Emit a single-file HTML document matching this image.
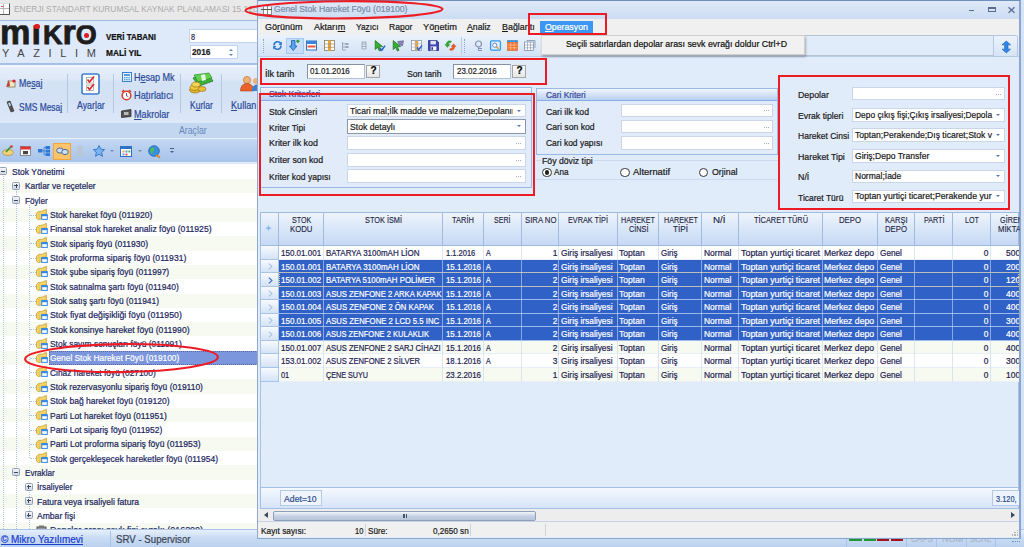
<!DOCTYPE html>
<html lang="tr">
<head>
<meta charset="utf-8">
<title>Genel Stok Hareket Föyü (019100)</title>
<style>
html,body{margin:0;padding:0;}
body{width:1024px;height:547px;overflow:hidden;position:relative;background:#d6e4f7;font-family:"Liberation Sans",sans-serif;font-size:9.5px;color:#1a1a1a;}
.a{position:absolute;box-sizing:border-box;}
.t{position:absolute;white-space:nowrap;transform-origin:0 50%;line-height:12px;height:12px;-webkit-text-stroke-width:.22px;}
u{text-decoration:underline;}
svg{position:absolute;overflow:visible;}
.inp{position:absolute;background:#fff;border:1px solid #c5d3e6;box-sizing:border-box;}
.red{position:absolute;border:2.4px solid #ed1c24;box-sizing:border-box;}
.sep{position:absolute;width:1px;background:#b4c8e2;}
.row{position:absolute;left:0;width:257px;height:14.33px;}
.g{background:#f6faf0;}
.pm{position:absolute;width:8px;height:8px;border:1px solid #909eb6;border-radius:1.5px;background:linear-gradient(#f4f6fa,#cfd7e3);box-sizing:border-box;}
.pm:before{content:"";position:absolute;left:1px;top:2.5px;width:4px;height:1px;background:#3a4658;}
.pm.p:after{content:"";position:absolute;left:2.5px;top:1px;width:1px;height:4px;background:#3a4658;}
.fo{position:absolute;width:11px;height:9px;}
.hc{position:absolute;top:211px;height:36px;border-right:1px solid #b4c9e6;box-sizing:border-box;}
.gr{position:absolute;left:260px;width:758px;height:13.6px;}
.vl{position:absolute;width:1px;top:247px;height:136px;background:#e3eaf3;}
.dd{position:absolute;width:0;height:0;border-left:2.3px solid transparent;border-right:2.3px solid transparent;border-top:2.7px solid #4f78b4;}
.el{position:absolute;font-size:7px;color:#9aa;letter-spacing:0;line-height:6px;}
</style>
</head>
<body>
<div class="a" style="left:0;top:0;width:258px;height:20px;background:#e9e9e9;"></div>
<div class="a" style="left:-1px;top:3px;width:11px;height:11.6px;background:#fdfdfd;border:1px solid #555;border-top-color:#e0e0e0;"></div>
<div class="a" style="left:3px;top:4px;width:1px;height:10px;background:#b5b5b5;"></div><div class="a" style="left:0;top:7.6px;width:9px;height:1px;background:#b5b5b5;"></div><div class="a" style="left:1px;top:5.6px;width:1.6px;height:1.6px;border-radius:1px;background:#e33;"></div>
<div class="t" id="t0" style="left:13.5px;top:3.2px;font-size:9.50px;color:#ababab;transform:scaleX(0.882);-webkit-text-stroke:0;">ENERJI STANDART KURUMSAL KAYNAK PLANLAMASI 15.12c</div>
<div class="a" style="left:0;top:20px;width:258px;height:44.6px;background:#deeafa;border-top:1px solid #9dbbe4;border-bottom:2px solid #a3c0e8;"></div>
<div class="t" id="t1" style="left:-0.3px;top:29.5px;font-size:35.50px;color:#1d1d1d;font-weight:bold;transform:scaleX(0.965);line-height:40px;height:40px;top:12.3px;clip-path:inset(12.9px 0 0 0);-webkit-text-stroke:.8px #1d1d1d;"><span>m</span><span style="margin-left:1px">i</span><span style="font-size:28px;margin-left:2px">K</span><span>r</span><span style="font-size:28px">O</span></div>
<div class="a" style="left:34.2px;top:23.8px;width:5.4px;height:5.4px;border-radius:3px;background:#e11b22;"></div>
<div class="a" style="left:84px;top:33px;width:5px;height:5px;border-radius:3px;background:#e11b22;"></div>
<div class="t" id="t2" style="left:2.0px;top:47.3px;font-size:10.50px;color:#444;transform:scaleX(1.045);letter-spacing:8.3px;-webkit-text-stroke:0;">YAZILIM</div>
<div class="t" id="t3" style="left:106.2px;top:31.2px;font-size:9.00px;color:#111;font-weight:bold;transform:scaleX(0.880);">VERİ TABANI</div>
<div class="t" id="t4" style="left:106.2px;top:47.0px;font-size:9.00px;color:#111;font-weight:bold;transform:scaleX(0.923);">MALİ YIL</div>
<div class="inp" style="left:189.4px;top:29.3px;width:70px;height:14.2px;border-color:#c3d5ee;"></div>
<div class="t" id="t5" style="left:191.2px;top:30.5px;font-size:9.00px;color:#2a2a4a;transform:scaleX(0.798);">8</div>
<div class="inp" style="left:189.8px;top:45.3px;width:48px;height:14.2px;border-color:#c3d5ee;"></div>
<div class="t" id="t6" style="left:191.6px;top:46.0px;font-size:9.50px;color:#1a1a1a;font-weight:bold;transform:scaleX(0.870);">2016</div>
<div class="dd" style="left:228.5px;top:54px;border-top-color:#6484b2;border-width:2px 2px 0 2px;border-top-width:2.5px;"></div>
<div class="dd" style="left:228.5px;top:48.5px;border-top:none;border-bottom:2.5px solid #6484b2;border-left-width:2px;border-right-width:2px;"></div>
<div class="a" style="left:0;top:64.6px;width:258px;height:58px;background:linear-gradient(#e6eefa 0,#dfe9f8 20%,#d4e2f5 27%,#d5e2f6 60%,#dde8f8 100%);border-top:2px solid #f1f6fd;"></div>
<div class="a" style="left:0;top:122.7px;width:258px;height:15px;background:#c4d7f0;"></div>
<div class="a" style="left:0;top:137.5px;width:258px;height:25.5px;background:linear-gradient(#c6d9f3,#b4ccee 50%,#a9c4eb);border-top:1.5px solid #e9f1fb;border-bottom:1px solid #e4edf9;"></div>
<div class="sep" style="left:67.2px;top:74px;height:39px;"></div>
<div class="sep" style="left:112.8px;top:74px;height:39px;"></div>
<div class="sep" style="left:180.2px;top:74px;height:39px;"></div>
<div class="sep" style="left:221.2px;top:74px;height:39px;"></div>
<svg style="left:5px;top:78px" width="12" height="11" viewBox="0 0 12 11"><rect x="3" y="3" width="7" height="6" fill="#f0e7c8" stroke="#8a7a4a" stroke-width=".8"/><path d="M1 9 L4 2 L5 8z" fill="#c0392b"/><circle cx="9" cy="3" r="1.6" fill="#d23"/></svg>
<div class="t" id="t7" style="left:19.0px;top:76.7px;font-size:10.50px;color:#2a4a9a;transform:scaleX(0.835);">Me<u>s</u>aj</div>
<svg style="left:6px;top:101px" width="9" height="12" viewBox="0 0 9 12"><path d="M1 1 L4 0 L8 10 L5 11z" fill="#555" stroke="#222" stroke-width=".6"/><path d="M2.2 2.2 L3.8 1.6 L5 4.6 L3.4 5.2z" fill="#cde"/></svg>
<div class="t" id="t8" style="left:19.0px;top:101.2px;font-size:10.50px;color:#2a4a9a;transform:scaleX(0.804);">SMS Mesa<u>j</u></div>
<svg style="left:81px;top:72.5px" width="19" height="22" viewBox="0 0 19 22"><rect x="1" y="1" width="17" height="20" rx="2" fill="#fdfdfd" stroke="#3d7fd0" stroke-width="1.6"/><rect x="5.5" y="4.5" width="7" height="5.5" fill="#fff" stroke="#999" stroke-width=".7"/><rect x="5.5" y="12" width="7" height="5.5" fill="#fff" stroke="#999" stroke-width=".7"/><path d="M6.5 6.5 L8.5 9 L13 3.5" fill="none" stroke="#d22" stroke-width="1.6"/><path d="M6.5 14 L8.5 16.5 L13 11" fill="none" stroke="#d22" stroke-width="1.6"/></svg>
<div class="t" id="t9" style="left:76.9px;top:99.4px;font-size:10.50px;color:#2a4a9a;transform:scaleX(0.837);">Ayar<u>l</u>ar</div>
<svg style="left:121.5px;top:72px" width="10" height="10" viewBox="0 0 10 10"><rect x=".5" y=".5" width="9" height="9" fill="#e8f2fc" stroke="#3b7fd1"/><rect x="2" y="2" width="6" height="2" fill="#5a9be0"/><g fill="#5a9be0"><rect x="2" y="5" width="1.5" height="1.3"/><rect x="4.2" y="5" width="1.5" height="1.3"/><rect x="6.4" y="5" width="1.5" height="1.3"/><rect x="2" y="7" width="1.5" height="1.3"/><rect x="4.2" y="7" width="1.5" height="1.3"/><rect x="6.4" y="7" width="1.5" height="1.3"/></g></svg>
<div class="t" id="t10" style="left:133.9px;top:71.2px;font-size:10.50px;color:#2a4a9a;transform:scaleX(0.859);">H<u>e</u>sap Mk</div>
<svg style="left:120.5px;top:89px" width="11" height="12" viewBox="0 0 11 12"><circle cx="5.5" cy="6.5" r="4.3" fill="#fff" stroke="#d8402a" stroke-width="1.6"/><path d="M1 3 L3 1 M10 3 L8 1" stroke="#d8402a" stroke-width="1.6"/><path d="M5.5 4 V6.8 L7.3 7.5" fill="none" stroke="#337" stroke-width=".8"/></svg>
<div class="t" id="t11" style="left:133.9px;top:89.0px;font-size:10.50px;color:#2a4a9a;transform:scaleX(0.874);">Ha<u>t</u>ırlatıcı</div>
<svg style="left:120.5px;top:108.5px" width="11" height="9" viewBox="0 0 11 9"><path d="M0.5 2 L10 .5 V7.5 L.5 8.5z" fill="#555" stroke="#222" stroke-width=".7"/><rect x="3" y="3" width="4.5" height="3" fill="#bbb"/></svg>
<div class="t" id="t12" style="left:134.2px;top:107.5px;font-size:10.50px;color:#2a4a9a;transform:scaleX(0.866);"><u>M</u>akrolar</div>
<svg style="left:188px;top:73px" width="26" height="21" viewBox="0 0 26 21"><path d="M5 5 L20 1 L25 8 L11 13z" fill="#3cb43c" stroke="#1f7a1f" stroke-width=".8"/><path d="M6 2 L21 0 L24 5 L10 9z" fill="#62d24e" stroke="#1f7a1f" stroke-width=".6"/><path d="M13 2 L17 1.3 L18 7 L14 8z" fill="#e9f5e4"/><ellipse cx="7" cy="17" rx="5.5" ry="3" fill="#e2b52e" stroke="#9a7412" stroke-width=".7"/><ellipse cx="7" cy="14.5" rx="5" ry="2.8" fill="#f0c83c" stroke="#9a7412" stroke-width=".7"/><ellipse cx="8" cy="11.5" rx="4.2" ry="2.5" fill="#f6d555" stroke="#9a7412" stroke-width=".7"/><ellipse cx="14" cy="16" rx="4" ry="2.4" fill="#eac03a" stroke="#9a7412" stroke-width=".7"/></svg>
<div class="t" id="t13" style="left:190.0px;top:99.4px;font-size:10.50px;color:#2a4a9a;transform:scaleX(0.813);">K<u>u</u>rlar</div>
<svg style="left:240px;top:75px" width="18" height="18" viewBox="0 0 18 18"><circle cx="7" cy="5" r="3.6" fill="#f0b070" stroke="#b66a28" stroke-width=".6"/><path d="M0.5 16 C0.5 10 4 8.5 7 8.5 S13.5 10 13.5 16z" fill="#e8622a" stroke="#a8401a" stroke-width=".6"/><circle cx="16" cy="6" r="3" fill="#f0b070"/><path d="M12 16 C12 11 14 9.5 18 9.5 V16z" fill="#3d7fd0"/></svg>
<div class="t" id="t14" style="left:231.0px;top:99.4px;font-size:10.50px;color:#2a4a9a;transform:scaleX(0.866);"><u>K</u>ullan</div>
<div class="t" id="t15" style="left:178.5px;top:124.6px;font-size:10.00px;color:#6488be;transform:scaleX(0.874);-webkit-text-stroke:0;">Araçlar</div>
<div class="a" style="left:53px;top:142.5px;width:18px;height:17px;background:#fbc46a;border:1px solid #f0a63a;"></div>
<svg style="left:2px;top:145px" width="12" height="11" viewBox="0 0 12 11"><ellipse cx="6" cy="7.5" rx="5.5" ry="3" fill="#f1d27a" stroke="#b38a22" stroke-width=".7"/><path d="M4 7 L9 1.5" stroke="#3a9a3a" stroke-width="1.8"/><circle cx="9.5" cy="1.5" r="1.3" fill="#d33"/></svg>
<svg style="left:20px;top:145px" width="11" height="11" viewBox="0 0 11 11"><rect x=".5" y="1.5" width="10" height="9" fill="#fff" stroke="#777" stroke-width=".8"/><rect x=".5" y="1.5" width="10" height="3" fill="#d33"/><rect x="3" y="6" width="5" height="3.2" fill="#444"/></svg>
<svg style="left:38px;top:146px" width="12" height="10" viewBox="0 0 12 10"><rect x="0" y="3" width="4.5" height="3.5" fill="#2f78d6"/><rect x="7.5" y="0" width="4.5" height="3" fill="#2f78d6"/><rect x="7.5" y="3.6" width="4.5" height="3" fill="#2f78d6"/><rect x="7.5" y="7.2" width="4.5" height="2.8" fill="#2f78d6"/><path d="M4.5 4.8 H7.5 M6 1.5 V8.6 M6 1.5 H7.5 M6 8.6 H7.5" stroke="#2f78d6" stroke-width=".8" fill="none"/></svg>
<svg style="left:56px;top:147px" width="13" height="8" viewBox="0 0 13 8"><ellipse cx="4" cy="3.5" rx="3.3" ry="2.6" fill="#cfe0f5" stroke="#4a6c9c" stroke-width="1"/><ellipse cx="9" cy="5" rx="3.3" ry="2.6" fill="#cfe0f5" stroke="#4a6c9c" stroke-width="1"/></svg>
<svg style="left:75px;top:145px" width="10" height="12" viewBox="0 0 10 12"><circle cx="5" cy="3.2" r="2.8" fill="#b9c6d8"/><path d="M0.5 11.5 C.5 7 2.5 6 5 6 S9.5 7 9.5 11.5z" fill="#b9c6d8"/></svg>
<svg style="left:92.5px;top:145px" width="12" height="12" viewBox="0 0 12 12"><path d="M6 .5 L7.7 4.2 L11.6 4.6 L8.7 7.3 L9.5 11.3 L6 9.3 L2.5 11.3 L3.3 7.3 L.4 4.6 L4.3 4.2z" fill="#7db4ee" stroke="#2f72c4" stroke-width=".9"/></svg>
<div class="dd" style="left:110px;top:150px;border-top-color:#6f8fb8;border-width:2.5px 2px 0 2px;"></div>
<svg style="left:120px;top:145.5px" width="12" height="11" viewBox="0 0 12 11"><rect x=".5" y=".5" width="11" height="10" fill="#fff" stroke="#2f72c4" stroke-width="1"/><rect x=".5" y=".5" width="11" height="2.5" fill="#2f72c4"/><rect x="2.5" y="4.5" width="2" height="2" fill="#e8a23a"/><rect x="5.5" y="4.5" width="2" height="2" fill="#5a9be0"/><rect x="8.3" y="4.5" width="2" height="2" fill="#5ab45a"/><rect x="2.5" y="7.5" width="2" height="2" fill="#5a9be0"/><rect x="5.5" y="7.5" width="2" height="2" fill="#d55"/></svg>
<div class="dd" style="left:138px;top:150px;border-top-color:#6f8fb8;border-width:2.5px 2px 0 2px;"></div>
<svg style="left:147.5px;top:144.5px" width="13" height="13" viewBox="0 0 13 13"><circle cx="6" cy="6" r="5.3" fill="#3a8ee0" stroke="#1d5fae" stroke-width=".8"/><path d="M3 3 C5 1.5 7 3 6 5 S3.5 7.5 5 9.5 C3 9 1.5 6 3 3z" fill="#4cc04c"/><path d="M8 10 L12 12.5" stroke="#d9861f" stroke-width="1.8"/></svg>
<div class="a" style="left:170px;top:148px;width:4px;height:1px;background:#44608c;"></div><div class="dd" style="left:170px;top:150.5px;border-top-color:#44608c;border-width:2px 2px 0 2px;"></div>
<div class="a" style="left:0;top:163px;width:258px;height:366px;background:#fff;overflow:hidden;border-top:1.4px solid #dce8f8;"></div>
<div class="row g" style="top:178.87px"></div>
<div class="row g" style="top:207.53px"></div>
<div class="row g" style="top:236.19px"></div>
<div class="row g" style="top:264.84px"></div>
<div class="row g" style="top:293.50px"></div>
<div class="row g" style="top:322.16px"></div>
<div class="row g" style="top:350.82px"></div>
<div class="row g" style="top:379.48px"></div>
<div class="row g" style="top:408.14px"></div>
<div class="row g" style="top:436.80px"></div>
<div class="row g" style="top:465.46px"></div>
<div class="row g" style="top:494.12px"></div>
<div class="row g" style="top:522.79px"></div>
<div class="a" style="left:3px;top:176px;width:0;height:353px;border-left:1px dotted #b4c5e0;"></div>
<div class="a" style="left:16px;top:191px;width:0;height:338px;border-left:1px dotted #b4c5e0;"></div>
<div class="a" style="left:29px;top:205px;width:0;height:253px;border-left:1px dotted #b4c5e0;"></div>
<div class="a" style="left:29px;top:492px;width:0;height:37px;border-left:1px dotted #b4c5e0;"></div>
<div class="pm" style="left:-0.9px;top:167.3px"></div>
<div class="t" id="t16" style="left:11.5px;top:166.0px;font-size:9.50px;color:#20255e;transform:scaleX(0.898);">Stok Yönetimi</div>
<div class="pm p" style="left:12.0px;top:181.6px"></div>
<div class="t" id="t17" style="left:24.6px;top:180.3px;font-size:9.50px;color:#20255e;transform:scaleX(0.880);">Kartlar ve reçeteler</div>
<div class="pm" style="left:12.0px;top:196.0px"></div>
<div class="t" id="t18" style="left:24.6px;top:194.7px;font-size:9.50px;color:#20255e;transform:scaleX(0.860);">Föyler</div>
<div class="a" style="left:30px;top:214.7px;width:6px;height:0;border-top:1px dotted #b4c5e0;"></div>
<svg style="left:36px;top:208.7px" width="12" height="11" viewBox="0 0 12 11"><path d="M.5 4.2 L2.8 2.4 L6.2 2.2 L10.4 .4 L10.4 5 L5.4 5.4 L5.4 10 L2 10.5 L.5 9z" fill="#f6d66c" stroke="#c9a030" stroke-width=".8"/><path d="M2.8 2.6 L3.4 9.8" stroke="#e0b840" stroke-width=".7"/><rect x="5.7" y="5.6" width="5.6" height="4.8" fill="#fff" stroke="#2f86e6" stroke-width="1"/><rect x="5.7" y="5.6" width="5.6" height="1.6" fill="#2f86e6"/></svg>
<div class="t" id="t19" style="left:49.9px;top:209.0px;font-size:9.50px;color:#20255e;transform:scaleX(0.899);">Stok hareket föyü (011920)</div>
<div class="a" style="left:30px;top:229.0px;width:6px;height:0;border-top:1px dotted #b4c5e0;"></div>
<svg style="left:36px;top:223.0px" width="12" height="11" viewBox="0 0 12 11"><path d="M.5 4.2 L2.8 2.4 L6.2 2.2 L10.4 .4 L10.4 5 L5.4 5.4 L5.4 10 L2 10.5 L.5 9z" fill="#f6d66c" stroke="#c9a030" stroke-width=".8"/><path d="M2.8 2.6 L3.4 9.8" stroke="#e0b840" stroke-width=".7"/><rect x="5.7" y="5.6" width="5.6" height="4.8" fill="#fff" stroke="#2f86e6" stroke-width="1"/><rect x="5.7" y="5.6" width="5.6" height="1.6" fill="#2f86e6"/></svg>
<div class="t" id="t20" style="left:49.9px;top:223.3px;font-size:9.50px;color:#20255e;transform:scaleX(0.906);">Finansal stok hareket analiz föyü (011925)</div>
<div class="a" style="left:30px;top:243.3px;width:6px;height:0;border-top:1px dotted #b4c5e0;"></div>
<svg style="left:36px;top:237.3px" width="12" height="11" viewBox="0 0 12 11"><path d="M.5 4.2 L2.8 2.4 L6.2 2.2 L10.4 .4 L10.4 5 L5.4 5.4 L5.4 10 L2 10.5 L.5 9z" fill="#f6d66c" stroke="#c9a030" stroke-width=".8"/><path d="M2.8 2.6 L3.4 9.8" stroke="#e0b840" stroke-width=".7"/><rect x="5.7" y="5.6" width="5.6" height="4.8" fill="#fff" stroke="#2f86e6" stroke-width="1"/><rect x="5.7" y="5.6" width="5.6" height="1.6" fill="#2f86e6"/></svg>
<div class="t" id="t21" style="left:49.9px;top:237.7px;font-size:9.50px;color:#20255e;transform:scaleX(0.894);">Stok sipariş föyü (011930)</div>
<div class="a" style="left:30px;top:257.7px;width:6px;height:0;border-top:1px dotted #b4c5e0;"></div>
<svg style="left:36px;top:251.7px" width="12" height="11" viewBox="0 0 12 11"><path d="M.5 4.2 L2.8 2.4 L6.2 2.2 L10.4 .4 L10.4 5 L5.4 5.4 L5.4 10 L2 10.5 L.5 9z" fill="#f6d66c" stroke="#c9a030" stroke-width=".8"/><path d="M2.8 2.6 L3.4 9.8" stroke="#e0b840" stroke-width=".7"/><rect x="5.7" y="5.6" width="5.6" height="4.8" fill="#fff" stroke="#2f86e6" stroke-width="1"/><rect x="5.7" y="5.6" width="5.6" height="1.6" fill="#2f86e6"/></svg>
<div class="t" id="t22" style="left:49.9px;top:252.0px;font-size:9.50px;color:#20255e;transform:scaleX(0.907);">Stok proforma sipariş föyü (011931)</div>
<div class="a" style="left:30px;top:272.0px;width:6px;height:0;border-top:1px dotted #b4c5e0;"></div>
<svg style="left:36px;top:266.0px" width="12" height="11" viewBox="0 0 12 11"><path d="M.5 4.2 L2.8 2.4 L6.2 2.2 L10.4 .4 L10.4 5 L5.4 5.4 L5.4 10 L2 10.5 L.5 9z" fill="#f6d66c" stroke="#c9a030" stroke-width=".8"/><path d="M2.8 2.6 L3.4 9.8" stroke="#e0b840" stroke-width=".7"/><rect x="5.7" y="5.6" width="5.6" height="4.8" fill="#fff" stroke="#2f86e6" stroke-width="1"/><rect x="5.7" y="5.6" width="5.6" height="1.6" fill="#2f86e6"/></svg>
<div class="t" id="t23" style="left:49.9px;top:266.3px;font-size:9.50px;color:#20255e;transform:scaleX(0.897);">Stok şube sipariş föyü (011997)</div>
<div class="a" style="left:30px;top:286.3px;width:6px;height:0;border-top:1px dotted #b4c5e0;"></div>
<svg style="left:36px;top:280.3px" width="12" height="11" viewBox="0 0 12 11"><path d="M.5 4.2 L2.8 2.4 L6.2 2.2 L10.4 .4 L10.4 5 L5.4 5.4 L5.4 10 L2 10.5 L.5 9z" fill="#f6d66c" stroke="#c9a030" stroke-width=".8"/><path d="M2.8 2.6 L3.4 9.8" stroke="#e0b840" stroke-width=".7"/><rect x="5.7" y="5.6" width="5.6" height="4.8" fill="#fff" stroke="#2f86e6" stroke-width="1"/><rect x="5.7" y="5.6" width="5.6" height="1.6" fill="#2f86e6"/></svg>
<div class="t" id="t24" style="left:49.9px;top:280.6px;font-size:9.50px;color:#20255e;transform:scaleX(0.891);">Stok satınalma şartı föyü (011940)</div>
<div class="a" style="left:30px;top:300.7px;width:6px;height:0;border-top:1px dotted #b4c5e0;"></div>
<svg style="left:36px;top:294.7px" width="12" height="11" viewBox="0 0 12 11"><path d="M.5 4.2 L2.8 2.4 L6.2 2.2 L10.4 .4 L10.4 5 L5.4 5.4 L5.4 10 L2 10.5 L.5 9z" fill="#f6d66c" stroke="#c9a030" stroke-width=".8"/><path d="M2.8 2.6 L3.4 9.8" stroke="#e0b840" stroke-width=".7"/><rect x="5.7" y="5.6" width="5.6" height="4.8" fill="#fff" stroke="#2f86e6" stroke-width="1"/><rect x="5.7" y="5.6" width="5.6" height="1.6" fill="#2f86e6"/></svg>
<div class="t" id="t25" style="left:49.9px;top:295.0px;font-size:9.50px;color:#20255e;transform:scaleX(0.883);">Stok satış şartı föyü (011941)</div>
<div class="a" style="left:30px;top:315.0px;width:6px;height:0;border-top:1px dotted #b4c5e0;"></div>
<svg style="left:36px;top:309.0px" width="12" height="11" viewBox="0 0 12 11"><path d="M.5 4.2 L2.8 2.4 L6.2 2.2 L10.4 .4 L10.4 5 L5.4 5.4 L5.4 10 L2 10.5 L.5 9z" fill="#f6d66c" stroke="#c9a030" stroke-width=".8"/><path d="M2.8 2.6 L3.4 9.8" stroke="#e0b840" stroke-width=".7"/><rect x="5.7" y="5.6" width="5.6" height="4.8" fill="#fff" stroke="#2f86e6" stroke-width="1"/><rect x="5.7" y="5.6" width="5.6" height="1.6" fill="#2f86e6"/></svg>
<div class="t" id="t26" style="left:49.9px;top:309.3px;font-size:9.50px;color:#20255e;transform:scaleX(0.919);">Stok fiyat değişikliği föyü (011950)</div>
<div class="a" style="left:30px;top:329.3px;width:6px;height:0;border-top:1px dotted #b4c5e0;"></div>
<svg style="left:36px;top:323.3px" width="12" height="11" viewBox="0 0 12 11"><path d="M.5 4.2 L2.8 2.4 L6.2 2.2 L10.4 .4 L10.4 5 L5.4 5.4 L5.4 10 L2 10.5 L.5 9z" fill="#f6d66c" stroke="#c9a030" stroke-width=".8"/><path d="M2.8 2.6 L3.4 9.8" stroke="#e0b840" stroke-width=".7"/><rect x="5.7" y="5.6" width="5.6" height="4.8" fill="#fff" stroke="#2f86e6" stroke-width="1"/><rect x="5.7" y="5.6" width="5.6" height="1.6" fill="#2f86e6"/></svg>
<div class="t" id="t27" style="left:49.9px;top:323.6px;font-size:9.50px;color:#20255e;transform:scaleX(0.906);">Stok konsinye hareket föyü (011990)</div>
<div class="a" style="left:30px;top:343.7px;width:6px;height:0;border-top:1px dotted #b4c5e0;"></div>
<svg style="left:36px;top:337.7px" width="12" height="11" viewBox="0 0 12 11"><path d="M.5 4.2 L2.8 2.4 L6.2 2.2 L10.4 .4 L10.4 5 L5.4 5.4 L5.4 10 L2 10.5 L.5 9z" fill="#f6d66c" stroke="#c9a030" stroke-width=".8"/><path d="M2.8 2.6 L3.4 9.8" stroke="#e0b840" stroke-width=".7"/><rect x="5.7" y="5.6" width="5.6" height="4.8" fill="#fff" stroke="#2f86e6" stroke-width="1"/><rect x="5.7" y="5.6" width="5.6" height="1.6" fill="#2f86e6"/></svg>
<div class="t" id="t28" style="left:49.9px;top:338.0px;font-size:9.50px;color:#20255e;transform:scaleX(0.886);">Stok sayım sonuçları föyü (011991)</div>
<div class="a" style="left:30px;top:358.0px;width:6px;height:0;border-top:1px dotted #b4c5e0;"></div>
<div class="a" style="left:48.5px;top:351.3px;width:209px;height:13.3px;background:#7b96dc;border:1px dotted #5a6a9a;"></div>
<svg style="left:36px;top:352.0px" width="12" height="11" viewBox="0 0 12 11"><path d="M.5 4.2 L2.8 2.4 L6.2 2.2 L10.4 .4 L10.4 5 L5.4 5.4 L5.4 10 L2 10.5 L.5 9z" fill="#f6d66c" stroke="#c9a030" stroke-width=".8"/><path d="M2.8 2.6 L3.4 9.8" stroke="#e0b840" stroke-width=".7"/><rect x="5.7" y="5.6" width="5.6" height="4.8" fill="#fff" stroke="#2f86e6" stroke-width="1"/><rect x="5.7" y="5.6" width="5.6" height="1.6" fill="#2f86e6"/></svg>
<div class="t" id="t29" style="left:49.9px;top:352.3px;font-size:9.50px;color:#fff;transform:scaleX(0.877);">Genel Stok Hareket Föyü (019100)</div>
<div class="a" style="left:30px;top:372.3px;width:6px;height:0;border-top:1px dotted #b4c5e0;"></div>
<svg style="left:36px;top:366.3px" width="12" height="11" viewBox="0 0 12 11"><path d="M.5 4.2 L2.8 2.4 L6.2 2.2 L10.4 .4 L10.4 5 L5.4 5.4 L5.4 10 L2 10.5 L.5 9z" fill="#f6d66c" stroke="#c9a030" stroke-width=".8"/><path d="M2.8 2.6 L3.4 9.8" stroke="#e0b840" stroke-width=".7"/><rect x="5.7" y="5.6" width="5.6" height="4.8" fill="#fff" stroke="#2f86e6" stroke-width="1"/><rect x="5.7" y="5.6" width="5.6" height="1.6" fill="#2f86e6"/></svg>
<div class="t" id="t30" style="left:49.9px;top:366.6px;font-size:9.50px;color:#20255e;transform:scaleX(0.882);">Cihaz hareket föyü (027100)</div>
<div class="a" style="left:30px;top:386.6px;width:6px;height:0;border-top:1px dotted #b4c5e0;"></div>
<svg style="left:36px;top:380.6px" width="12" height="11" viewBox="0 0 12 11"><path d="M.5 4.2 L2.8 2.4 L6.2 2.2 L10.4 .4 L10.4 5 L5.4 5.4 L5.4 10 L2 10.5 L.5 9z" fill="#f6d66c" stroke="#c9a030" stroke-width=".8"/><path d="M2.8 2.6 L3.4 9.8" stroke="#e0b840" stroke-width=".7"/><rect x="5.7" y="5.6" width="5.6" height="4.8" fill="#fff" stroke="#2f86e6" stroke-width="1"/><rect x="5.7" y="5.6" width="5.6" height="1.6" fill="#2f86e6"/></svg>
<div class="t" id="t31" style="left:49.9px;top:380.9px;font-size:9.50px;color:#20255e;transform:scaleX(0.892);">Stok rezervasyonlu sipariş föyü (019110)</div>
<div class="a" style="left:30px;top:401.0px;width:6px;height:0;border-top:1px dotted #b4c5e0;"></div>
<svg style="left:36px;top:395.0px" width="12" height="11" viewBox="0 0 12 11"><path d="M.5 4.2 L2.8 2.4 L6.2 2.2 L10.4 .4 L10.4 5 L5.4 5.4 L5.4 10 L2 10.5 L.5 9z" fill="#f6d66c" stroke="#c9a030" stroke-width=".8"/><path d="M2.8 2.6 L3.4 9.8" stroke="#e0b840" stroke-width=".7"/><rect x="5.7" y="5.6" width="5.6" height="4.8" fill="#fff" stroke="#2f86e6" stroke-width="1"/><rect x="5.7" y="5.6" width="5.6" height="1.6" fill="#2f86e6"/></svg>
<div class="t" id="t32" style="left:49.9px;top:395.3px;font-size:9.50px;color:#20255e;transform:scaleX(0.898);">Stok bağ hareket föyü (019120)</div>
<div class="a" style="left:30px;top:415.3px;width:6px;height:0;border-top:1px dotted #b4c5e0;"></div>
<svg style="left:36px;top:409.3px" width="12" height="11" viewBox="0 0 12 11"><path d="M.5 4.2 L2.8 2.4 L6.2 2.2 L10.4 .4 L10.4 5 L5.4 5.4 L5.4 10 L2 10.5 L.5 9z" fill="#f6d66c" stroke="#c9a030" stroke-width=".8"/><path d="M2.8 2.6 L3.4 9.8" stroke="#e0b840" stroke-width=".7"/><rect x="5.7" y="5.6" width="5.6" height="4.8" fill="#fff" stroke="#2f86e6" stroke-width="1"/><rect x="5.7" y="5.6" width="5.6" height="1.6" fill="#2f86e6"/></svg>
<div class="t" id="t33" style="left:49.9px;top:409.6px;font-size:9.50px;color:#20255e;transform:scaleX(0.896);">Parti Lot hareket föyü (011951)</div>
<div class="a" style="left:30px;top:429.6px;width:6px;height:0;border-top:1px dotted #b4c5e0;"></div>
<svg style="left:36px;top:423.6px" width="12" height="11" viewBox="0 0 12 11"><path d="M.5 4.2 L2.8 2.4 L6.2 2.2 L10.4 .4 L10.4 5 L5.4 5.4 L5.4 10 L2 10.5 L.5 9z" fill="#f6d66c" stroke="#c9a030" stroke-width=".8"/><path d="M2.8 2.6 L3.4 9.8" stroke="#e0b840" stroke-width=".7"/><rect x="5.7" y="5.6" width="5.6" height="4.8" fill="#fff" stroke="#2f86e6" stroke-width="1"/><rect x="5.7" y="5.6" width="5.6" height="1.6" fill="#2f86e6"/></svg>
<div class="t" id="t34" style="left:49.9px;top:423.9px;font-size:9.50px;color:#20255e;transform:scaleX(0.891);">Parti Lot sipariş föyü (011952)</div>
<div class="a" style="left:30px;top:444.0px;width:6px;height:0;border-top:1px dotted #b4c5e0;"></div>
<svg style="left:36px;top:438.0px" width="12" height="11" viewBox="0 0 12 11"><path d="M.5 4.2 L2.8 2.4 L6.2 2.2 L10.4 .4 L10.4 5 L5.4 5.4 L5.4 10 L2 10.5 L.5 9z" fill="#f6d66c" stroke="#c9a030" stroke-width=".8"/><path d="M2.8 2.6 L3.4 9.8" stroke="#e0b840" stroke-width=".7"/><rect x="5.7" y="5.6" width="5.6" height="4.8" fill="#fff" stroke="#2f86e6" stroke-width="1"/><rect x="5.7" y="5.6" width="5.6" height="1.6" fill="#2f86e6"/></svg>
<div class="t" id="t35" style="left:49.9px;top:438.3px;font-size:9.50px;color:#20255e;transform:scaleX(0.903);">Parti Lot proforma sipariş föyü (011953)</div>
<div class="a" style="left:30px;top:458.3px;width:6px;height:0;border-top:1px dotted #b4c5e0;"></div>
<svg style="left:36px;top:452.3px" width="12" height="11" viewBox="0 0 12 11"><path d="M.5 4.2 L2.8 2.4 L6.2 2.2 L10.4 .4 L10.4 5 L5.4 5.4 L5.4 10 L2 10.5 L.5 9z" fill="#f6d66c" stroke="#c9a030" stroke-width=".8"/><path d="M2.8 2.6 L3.4 9.8" stroke="#e0b840" stroke-width=".7"/><rect x="5.7" y="5.6" width="5.6" height="4.8" fill="#fff" stroke="#2f86e6" stroke-width="1"/><rect x="5.7" y="5.6" width="5.6" height="1.6" fill="#2f86e6"/></svg>
<div class="t" id="t36" style="left:49.9px;top:452.6px;font-size:9.50px;color:#20255e;transform:scaleX(0.895);">Stok gerçekleşecek hareketler föyü (011954)</div>
<div class="pm" style="left:12.0px;top:468.2px"></div>
<div class="t" id="t37" style="left:24.6px;top:466.9px;font-size:9.50px;color:#20255e;transform:scaleX(0.850);">Evraklar</div>
<div class="pm p" style="left:24.8px;top:482.6px"></div>
<div class="t" id="t38" style="left:37.4px;top:481.3px;font-size:9.50px;color:#20255e;transform:scaleX(0.873);">İrsaliyeler</div>
<div class="pm p" style="left:24.8px;top:496.9px"></div>
<div class="t" id="t39" style="left:37.4px;top:495.6px;font-size:9.50px;color:#20255e;transform:scaleX(0.899);">Fatura veya irsaliyeli fatura</div>
<div class="pm p" style="left:24.8px;top:511.2px"></div>
<div class="t" id="t40" style="left:37.4px;top:509.9px;font-size:9.50px;color:#20255e;transform:scaleX(0.902);">Ambar fişi</div>
<svg style="left:35.5px;top:524.5px" width="11" height="11" viewBox="0 0 11 11"><rect x="1" y="2" width="9" height="9" fill="#999" stroke="#555"/><rect x="3" y="0.5" width="5" height="2.5" fill="#777"/></svg>
<div class="t" id="t41" style="left:49.9px;top:524.2px;font-size:9.50px;color:#20255e;transform:scaleX(0.941);">Depolar arası sevk fişi evrakı (016200)</div>
<div class="a" style="left:0;top:529px;width:1024px;height:18px;background:linear-gradient(#e6f0fc,#cbddf4 45%,#b9d0ee);border-top:1px solid #a9c3e6;"></div>
<div class="t" id="t42" style="left:0.5px;top:533.3px;font-size:10.50px;color:#1a3ed0;transform:scaleX(0.946);text-decoration:underline;">© Mikro Yazılımevi</div>
<div class="sep" style="left:110px;top:531px;height:16px;background:#a9c3e6;"></div>
<div class="t" id="t43" style="left:115.5px;top:533.3px;font-size:10.50px;color:#3c4656;transform:scaleX(0.921);">SRV - Supervisor</div>
<div class="a" style="left:849.2px;top:538.5px;width:12.8px;height:2px;background:#1f9a32;"></div>
<div class="a" style="left:863.5px;top:538.5px;width:12.0px;height:2px;background:#1f9a32;"></div>
<div class="a" style="left:877.3px;top:538.5px;width:12.0px;height:2px;background:#a3121a;"></div>
<div class="a" style="left:890.5px;top:538.5px;width:12.0px;height:2px;background:#a3121a;"></div>
<div class="t" id="t44" style="left:910.7px;top:532.6px;font-size:9.50px;color:#aab7c8;transform:scaleX(0.843);">CAPS</div>
<div class="t" id="t45" style="left:941.8px;top:532.6px;font-size:9.50px;color:#aab7c8;transform:scaleX(0.989);">NUM</div>
<div class="t" id="t46" style="left:970.0px;top:532.6px;font-size:9.50px;color:#aab7c8;transform:scaleX(0.840);">SCRL</div>
<div class="sep" style="left:846px;top:538px;height:9px;background:#a9c3e6;"></div>
<div class="sep" style="left:906px;top:538px;height:9px;background:#a9c3e6;"></div>
<div class="sep" style="left:936px;top:538px;height:9px;background:#a9c3e6;"></div>
<div class="sep" style="left:966px;top:538px;height:9px;background:#a9c3e6;"></div>
<div class="sep" style="left:995px;top:538px;height:9px;background:#a9c3e6;"></div>
<div class="a" style="left:1012px;top:541px;width:8px;height:1px;border-top:1px dotted #6e8fc0;"></div>
<div class="a" style="left:256.5px;top:0;width:764.5px;height:538.5px;background:#e1ecfb;border-left:1.5px solid #8fa8cc;border-right:2px solid #8ba5cc;border-bottom:1.6px solid #8ba5cc;"></div>
<div class="a" style="left:256.5px;top:0;width:764.5px;height:19px;background:linear-gradient(#dfe9f8,#cbdcf3);border-top:1px solid #6f8fbd;border-left:1.5px solid #8fa8cc;border-right:2px solid #8ba5cc;"></div>
<div class="a" style="left:263px;top:6px;width:8.5px;height:9px;background:#fdfdfd;border:1px solid #8a8a8a;border-top-color:#ddd;"></div><div class="a" style="left:266.5px;top:6px;width:1px;height:9px;background:#888;"></div><div class="a" style="left:260.5px;top:8.5px;width:11px;height:1px;background:#555;"></div>
<div class="t" id="t47" style="left:273.8px;top:2.8px;font-size:9.50px;color:#7a8aa6;transform:scaleX(0.906);">Genel Stok Hareket Föyü (019100)</div>
<div class="a" style="left:969px;top:9.5px;width:5px;height:1.5px;background:#5a6f90;"></div>
<div class="a" style="left:988.3px;top:7px;width:7.4px;height:5.4px;border:1px solid #5a6f90;border-top-width:2px;"></div>
<svg style="left:1008.2px;top:6.8px" width="7" height="6" viewBox="0 0 7 6"><path d="M.5 .3 L6.5 5.7 M6.5 .3 L.5 5.7" stroke="#5a6f90" stroke-width="1.3"/></svg>
<div class="a" style="left:258px;top:19px;width:761px;height:16px;background:#f0f0f0;"></div>
<div class="t" id="t48" style="left:265.2px;top:21.0px;font-size:9.50px;color:#1a1a1a;transform:scaleX(0.946);">Gö<u>r</u>ünüm</div>
<div class="t" id="t49" style="left:314.0px;top:21.0px;font-size:9.50px;color:#1a1a1a;transform:scaleX(0.953);">Aktarı<u>m</u></div>
<div class="t" id="t50" style="left:355.8px;top:21.0px;font-size:9.50px;color:#1a1a1a;transform:scaleX(0.875);">Ya<u>z</u>ıcı</div>
<div class="t" id="t51" style="left:388.8px;top:21.0px;font-size:9.50px;color:#1a1a1a;transform:scaleX(0.899);">Ra<u>p</u>or</div>
<div class="t" id="t52" style="left:423.0px;top:21.0px;font-size:9.50px;color:#1a1a1a;transform:scaleX(0.972);">Yö<u>n</u>etim</div>
<div class="t" id="t53" style="left:467.4px;top:21.0px;font-size:9.50px;color:#1a1a1a;transform:scaleX(0.915);"><u>A</u>naliz</div>
<div class="t" id="t54" style="left:502.4px;top:21.0px;font-size:9.50px;color:#1a1a1a;transform:scaleX(0.938);"><u>B</u>ağlantı</div>
<div class="a" style="left:540.2px;top:20.6px;width:53.2px;height:12.9px;background:#3c97f3;"></div>
<div class="t" id="t55" style="left:545.2px;top:21.0px;font-size:9.50px;color:#fff;transform:scaleX(0.923);"><u>O</u>perasyon</div>
<div class="a" style="left:258px;top:35px;width:761px;height:21.5px;background:linear-gradient(#eaf2fc,#d3e2f6);border-bottom:1px solid #b9cde8;"></div>
<div class="a" style="left:263.4px;top:39px;width:0;height:14px;border-left:1px dotted #8da6c8;"></div>
<div class="a" style="left:460.6px;top:36.5px;width:1px;height:18.5px;background:#b9c9e0;"></div><div class="a" style="left:464.4px;top:39px;width:0;height:14px;border-left:1px dotted #8da6c8;"></div>
<div class="a" style="left:286px;top:38px;width:17.6px;height:15.6px;background:#c6defa;border:1px solid #a3c9f3;"></div>
<svg style="left:271.5px;top:40.4px" width="11" height="11" viewBox="0 0 11 11"><path d="M2 5.5 A3.6 3.6 0 0 1 9 4.2 M9 5.5 A3.6 3.6 0 0 1 2 6.8" fill="none" stroke="#2f7ad6" stroke-width="1.6"/><path d="M9.8 1.5 V5 H6.5z M1.2 9.5 V6 H4.5z" fill="#2f7ad6"/></svg>
<svg style="left:289.0px;top:40.4px" width="11" height="11" viewBox="0 0 11 11"><path d="M2.5 .5 H6 V6 H8 L4.2 10.5 L.5 6 H2.5z" fill="#5aa2ee" stroke="#1d5fae" stroke-width=".8"/><path d="M7.2 1.2 H10.5 M8.8 -.3 V2.8" stroke="#2a9a2a" stroke-width="1.6"/></svg>
<svg style="left:305.9px;top:40.4px" width="11" height="11" viewBox="0 0 11 11"><rect x=".5" y="1" width="10" height="9" fill="#fff" stroke="#2f72c4"/><rect x=".5" y="1" width="10" height="3" fill="#3d84dc"/><rect x="1.5" y="5.5" width="8" height="2" fill="#e8553a"/></svg>
<svg style="left:323.5px;top:40.4px" width="11" height="11" viewBox="0 0 11 11"><rect x=".5" y=".5" width="10" height="10" fill="#fff" stroke="#8a7a5a" stroke-width=".8"/><rect x="4" y=".5" width="3" height="10" fill="#f0a23a"/><path d="M.5 4 H10.5 M.5 7.3 H10.5" stroke="#8a7a5a" stroke-width=".6"/></svg>
<svg style="left:340.5px;top:40.9px" width="9" height="10" viewBox="0 0 9 10"><path d="M1.5 1 V9 M1.5 3 H5 M1.5 6 H5 M1.5 9 H5" stroke="#9aa6b8" stroke-width="1" fill="none"/><rect x="4.5" y="2" width="3" height="2" fill="#9aa6b8"/><rect x="4.5" y="5" width="3" height="2" fill="#9aa6b8"/></svg>
<svg style="left:360.0px;top:41.4px" width="8" height="9" viewBox="0 0 8 9"><path d="M2 1 H6 V8 H2z M2 3 H6 M2 5.5 H6" stroke="#9aa6b8" stroke-width=".9" fill="none"/></svg>
<svg style="left:374.0px;top:39.9px" width="12" height="12" viewBox="0 0 12 12"><path d="M1.2 .6 L1.2 9.6 L3.6 7.4 L5.4 11 L7 10.2 L5.3 6.8 L8.6 6.6z" fill="#35b035" stroke="#157215" stroke-width=".7"/><path d="M6 8.2 L7.8 10.2 L11 5.6" fill="none" stroke="#2a62c8" stroke-width="1.6"/></svg>
<svg style="left:392.0px;top:39.9px" width="12" height="12" viewBox="0 0 12 12"><path d="M1.2 .6 L1.2 9.6 L3.6 7.4 L5.4 11 L7 10.2 L5.3 6.8 L8.6 6.6z" fill="#35b035" stroke="#157215" stroke-width=".7"/><path d="M5.5 1.5 L11.5 .8 L10.5 5.8 L7.5 5z" fill="#8a86b8" stroke="#5a5690" stroke-width=".6"/></svg>
<svg style="left:411.0px;top:40.4px" width="11" height="11" viewBox="0 0 11 11"><rect x=".5" y=".5" width="10" height="10" fill="#fff" stroke="#8c96a8" stroke-width=".8"/><rect x="4" y=".9" width="3" height="9.2" fill="#f2a33c"/><path d="M.5 3.8 H10.5 M.5 7.2 H10.5 M4 .5 V10.5 M7 .5 V10.5" stroke="#a8b0c0" stroke-width=".6"/><path d="M6 7.6 L7.8 9.8 L11 5.4" fill="none" stroke="#2a62c8" stroke-width="1.6"/></svg>
<svg style="left:428.3px;top:40.4px" width="11" height="11" viewBox="0 0 11 11"><path d="M.5 .5 H8.8 L10.5 2.2 V10.5 H.5z" fill="#3f46b4" stroke="#2a2f86" stroke-width=".8"/><rect x="2.5" y=".8" width="5.4" height="3.6" fill="#dfe3f5"/><rect x="2.6" y="6.4" width="5.8" height="4" fill="#f4f4fa"/><rect x="3.4" y="7.2" width="1.6" height="2.6" fill="#2a2f86"/></svg>
<svg style="left:445.1px;top:40.4px" width="11" height="11" viewBox="0 0 11 11"><path d="M5 .8 C2.6 .8 1.2 2.6 1.2 4.6 H0 L2.4 7.4 L4.8 4.6 H3.4 C3.4 3.4 4 2.8 5.4 2.8 L6.6 1.4z" fill="#2fae2f" stroke="#1c7a1c" stroke-width=".4"/><path d="M6 10.4 C8.4 10.4 9.8 8.6 9.8 6.6 H11 L8.6 3.8 L6.2 6.6 H7.6 C7.6 7.8 7 8.4 5.6 8.4 L4.4 9.8z" fill="#ee5a1c" stroke="#b83c0c" stroke-width=".4"/></svg>
<svg style="left:473.5px;top:40.4px" width="10" height="11" viewBox="0 0 10 11"><circle cx="4.5" cy="4" r="3" fill="none" stroke="#7f93b0" stroke-width="1.2"/><path d="M4.5 7 V10.5 M4.5 8.5 H8 M4.5 10.5 H8" stroke="#7f93b0" stroke-width="1" fill="none"/></svg>
<svg style="left:489.9px;top:40.4px" width="11" height="11" viewBox="0 0 11 11"><rect x=".6" y=".8" width="9.8" height="9.4" rx="1.2" fill="#e4f0fd" stroke="#2e96f0" stroke-width="1.3"/><circle cx="4.8" cy="5.2" r="2.1" fill="#fff" stroke="#5a7ab0" stroke-width=".9"/><path d="M6.4 6.8 L8.6 8.8" stroke="#e8902a" stroke-width="1.4"/></svg>
<svg style="left:507.2px;top:40.4px" width="11" height="11" viewBox="0 0 11 11"><rect x=".5" y=".8" width="10" height="9.6" fill="#f3702a" stroke="#d85a1a" stroke-width=".6"/><rect x=".2" y=".3" width="10.6" height="1.8" fill="#2e96f0"/><path d="M.5 5 H10.5 M.5 7.8 H10.5 M3.8 2 V10.4 M7.2 2 V10.4" stroke="#fbc9a4" stroke-width=".7"/></svg>
<svg style="left:524.2px;top:40.4px" width="12" height="11" viewBox="0 0 12 11"><rect x=".5" y="2" width="9" height="8.5" fill="#fff" stroke="#7f8fa8" stroke-width=".8"/><path d="M.5 5 H9.5 M.5 7.8 H9.5 M3.5 2 V10.5 M6.5 2 V10.5" stroke="#7f8fa8" stroke-width=".6"/><path d="M2.5 .5 H11 V8" stroke="#7f8fa8" stroke-width=".8" fill="none"/></svg>
<div class="a" style="left:804px;top:35.2px;width:189.5px;height:21.2px;background:#e1ecfb;border-top:1px solid #b9c2d0;border-bottom:1px solid #b9c2d0;"></div>
<div class="a" style="left:993.3px;top:35.2px;width:25.2px;height:21.4px;background:linear-gradient(#edf3fc,#d6e4f7);border:1px solid #b4c8e4;border-radius:2px;"></div>
<svg style="left:1001.8px;top:41px" width="8.6" height="12" viewBox="0 0 8 14" preserveAspectRatio="none"><path d="M4 0 L8 4.5 H5.6 V9.5 H8 L4 14 L0 9.5 H2.4 V4.5 H0z" fill="#2f86e6" stroke="#1b5fb8" stroke-width=".6"/></svg>
<div class="a" style="left:540.7px;top:35px;width:264.5px;height:19.6px;background:#f1f1f1;border:1px solid #cfcfcf;border-left-color:#dcdcdc;box-shadow:1px 1.5px 2px rgba(80,80,80,.4);"></div>
<div class="t" id="t56" style="left:565.9px;top:38.4px;font-size:9.50px;color:#111;transform:scaleX(0.927);">Seçili satırlardan depolar arası sevk evrağı doldur Ctrl+D</div>
<div class="t" id="t57" style="left:265.2px;top:68.1px;font-size:9.50px;color:#1a1a1a;transform:scaleX(0.957);">İlk tarih</div>
<div class="inp" style="left:306.8px;top:64px;width:58.4px;height:14.7px;border-color:#8593a8 #b5c0d0 #b5c0d0 #8593a8;"></div>
<div class="t" id="t58" style="left:310.3px;top:65.0px;font-size:9.50px;color:#1a1a1a;transform:scaleX(0.837);">01.01.2016</div>
<div class="a" style="left:365.8px;top:65px;width:14.2px;height:12.8px;background:linear-gradient(#fbfbfb,#e6e6e6);border:1px solid #a5a5a5;"></div>
<div class="t" id="t59" style="left:370.6px;top:65.2px;font-size:10.00px;color:#000;font-weight:bold;">?</div>
<div class="t" id="t60" style="left:406.5px;top:68.1px;font-size:9.50px;color:#1a1a1a;transform:scaleX(0.910);">Son tarih</div>
<div class="inp" style="left:452.8px;top:64px;width:58.4px;height:14.7px;border-color:#8593a8 #b5c0d0 #b5c0d0 #8593a8;"></div>
<div class="t" id="t61" style="left:456.9px;top:65.0px;font-size:9.50px;color:#1a1a1a;transform:scaleX(0.837);">23.02.2016</div>
<div class="a" style="left:511.8px;top:65px;width:14.2px;height:12.8px;background:linear-gradient(#fbfbfb,#e6e6e6);border:1px solid #a5a5a5;"></div>
<div class="t" id="t62" style="left:516.6px;top:65.2px;font-size:10.00px;color:#000;font-weight:bold;">?</div>
<div class="a" style="left:259.6px;top:86.5px;width:272.7px;height:101.5px;background:#e1ebfa;border:1px solid #98b8e6;"></div>
<div class="a" style="left:259.6px;top:86.5px;width:272.7px;height:14.5px;background:linear-gradient(#f1f6fd,#d5e3f7 50%,#b9d0f0);border:1px solid #98b8e6;border-bottom-color:#86aee6;"></div>
<div class="t" id="t63" style="left:268.5px;top:88.4px;font-size:9.50px;color:#34469a;transform:scaleX(0.898);">Stok Kriterleri</div>
<div class="t" id="t64" style="left:268.9px;top:105.8px;font-size:9.50px;color:#1a1a1a;transform:scaleX(0.902);">Stok Cinsleri</div>
<div class="t" id="t65" style="left:268.9px;top:121.5px;font-size:9.50px;color:#1a1a1a;transform:scaleX(0.900);">Kriter Tipi</div>
<div class="t" id="t66" style="left:268.9px;top:136.9px;font-size:9.50px;color:#1a1a1a;transform:scaleX(0.936);">Kriter ilk kod</div>
<div class="t" id="t67" style="left:268.9px;top:153.5px;font-size:9.50px;color:#1a1a1a;transform:scaleX(0.923);">Kriter son kod</div>
<div class="t" id="t68" style="left:268.9px;top:170.8px;font-size:9.50px;color:#1a1a1a;transform:scaleX(0.899);">Kriter kod yapısı</div>
<div class="inp" style="left:346.7px;top:103.8px;width:179.8px;height:13.7px;border-color:#c9d6e8;"></div>
<div class="dd" style="left:516.5px;top:109.5px;"></div>
<div class="inp" style="left:346.7px;top:118.8px;width:179.8px;height:14.8px;border-color:#8b98ac;"></div>
<div class="dd" style="left:516.5px;top:125.0px;"></div>
<div class="inp" style="left:346.7px;top:136.3px;width:179.8px;height:13.7px;border-color:#c9d6e8;"></div>
<div class="a" style="left:516px;top:143.2px;width:5px;height:0;border-top:1px dotted #9fb0c8;"></div>
<div class="inp" style="left:346.7px;top:152.9px;width:179.8px;height:13.7px;border-color:#c9d6e8;"></div>
<div class="a" style="left:516px;top:159.8px;width:5px;height:0;border-top:1px dotted #9fb0c8;"></div>
<div class="inp" style="left:346.7px;top:169.4px;width:179.8px;height:14.1px;border-color:#c9d6e8;"></div>
<div class="a" style="left:516px;top:176.4px;width:5px;height:0;border-top:1px dotted #9fb0c8;"></div>
<div class="t" id="t69" style="left:349.7px;top:104.6px;font-size:9.50px;color:#1a1a1a;transform:scaleX(0.904);clip-path:inset(0 1.3% 0 0);">Ticari mal;İlk madde ve malzeme;Depolanır</div>
<div class="t" id="t70" style="left:349.7px;top:120.9px;font-size:9.50px;color:#1a1a1a;transform:scaleX(0.909);">Stok detaylı</div>
<div class="a" style="left:536.3px;top:87.8px;width:241.5px;height:67.2px;background:#e1ebfa;border:1px solid #98b8e6;"></div>
<div class="a" style="left:536.3px;top:87.8px;width:241.5px;height:13.4px;background:linear-gradient(#f1f6fd,#d5e3f7 50%,#b9d0f0);border:1px solid #98b8e6;border-bottom-color:#86aee6;"></div>
<div class="t" id="t71" style="left:545.9px;top:89.0px;font-size:9.50px;color:#34469a;transform:scaleX(0.882);">Cari Kriteri</div>
<div class="t" id="t72" style="left:545.9px;top:106.0px;font-size:9.50px;color:#1a1a1a;transform:scaleX(0.915);">Cari ilk kod</div>
<div class="t" id="t73" style="left:545.9px;top:120.9px;font-size:9.50px;color:#1a1a1a;transform:scaleX(0.913);">Cari son kod</div>
<div class="t" id="t74" style="left:545.9px;top:136.8px;font-size:9.50px;color:#1a1a1a;transform:scaleX(0.892);">Cari kod yapısı</div>
<div class="inp" style="left:621.2px;top:103.7px;width:152.2px;height:13.0px;border-color:#c9d6e8;"></div>
<div class="a" style="left:764px;top:110.2px;width:5px;height:0;border-top:1px dotted #9fb0c8;"></div>
<div class="inp" style="left:621.2px;top:119.8px;width:152.2px;height:13.4px;border-color:#c9d6e8;"></div>
<div class="a" style="left:764px;top:126.5px;width:5px;height:0;border-top:1px dotted #9fb0c8;"></div>
<div class="inp" style="left:621.2px;top:136.0px;width:152.2px;height:13.7px;border-color:#c9d6e8;"></div>
<div class="a" style="left:764px;top:142.8px;width:5px;height:0;border-top:1px dotted #9fb0c8;"></div>
<div class="a" style="left:594px;top:160px;width:183.5px;height:1px;background:#ccd9ec;"></div><div class="a" style="left:536.3px;top:160px;width:4.5px;height:1px;background:#ccd9ec;"></div><div class="a" style="left:536.3px;top:178.6px;width:241.2px;height:1px;background:#ccd9ec;"></div>
<div class="t" id="t75" style="left:542.0px;top:155.2px;font-size:9.50px;color:#1a1a1a;transform:scaleX(0.915);">Föy döviz tipi</div>
<div class="a" style="left:542.1px;top:167.5px;width:9.6px;height:9.6px;border-radius:5px;background:#fff;border:1px solid #333;"></div>
<div class="a" style="left:544.6px;top:170.0px;width:4.6px;height:4.6px;border-radius:3px;background:#222;"></div>
<div class="t" id="t76" style="left:554.1px;top:166.3px;font-size:9.50px;color:#1a1a1a;transform:scaleX(0.858);">Ana</div>
<div class="a" style="left:620.2px;top:167.5px;width:9.6px;height:9.6px;border-radius:5px;background:#fff;border:1px solid #333;"></div>
<div class="t" id="t77" style="left:632.7px;top:166.3px;font-size:9.50px;color:#1a1a1a;transform:scaleX(0.992);">Alternatif</div>
<div class="a" style="left:698.9px;top:167.5px;width:9.6px;height:9.6px;border-radius:5px;background:#fff;border:1px solid #333;"></div>
<div class="t" id="t78" style="left:711.9px;top:166.3px;font-size:9.50px;color:#1a1a1a;transform:scaleX(0.929);">Orjinal</div>
<div class="t" id="t79" style="left:798.2px;top:88.6px;font-size:9.50px;color:#1a1a1a;transform:scaleX(0.928);">Depolar</div>
<div class="t" id="t80" style="left:798.2px;top:109.8px;font-size:9.50px;color:#1a1a1a;transform:scaleX(0.915);">Evrak tipleri</div>
<div class="t" id="t81" style="left:798.2px;top:129.7px;font-size:9.50px;color:#1a1a1a;transform:scaleX(0.896);">Hareket Cinsi</div>
<div class="t" id="t82" style="left:798.2px;top:150.6px;font-size:9.50px;color:#1a1a1a;transform:scaleX(0.923);">Hareket Tipi</div>
<div class="t" id="t83" style="left:798.2px;top:171.0px;font-size:9.50px;color:#1a1a1a;transform:scaleX(0.931);">N/İ</div>
<div class="t" id="t84" style="left:798.2px;top:191.8px;font-size:9.50px;color:#1a1a1a;transform:scaleX(0.896);">Ticaret Türü</div>
<div class="inp" style="left:852.3px;top:87.1px;width:153.2px;height:13.2px;border-color:#c9d6e8;"></div>
<div class="a" style="left:996px;top:93.7px;width:5px;height:0;border-top:1px dotted #9fb0c8;"></div>
<div class="inp" style="left:852.3px;top:108.2px;width:153.2px;height:13.6px;border-color:#c9d6e8;"></div>
<div class="dd" style="left:996.4px;top:113.8px;"></div>
<div class="t" id="t85" style="left:855.1px;top:108.8px;font-size:9.50px;color:#1a1a1a;transform:scaleX(0.883);">Depo çıkış fişi;Çıkış irsaliyesi;Depola</div>
<div class="inp" style="left:852.3px;top:128.4px;width:153.2px;height:14.0px;border-color:#c9d6e8;"></div>
<div class="dd" style="left:996.4px;top:134.2px;"></div>
<div class="t" id="t86" style="left:855.1px;top:129.2px;font-size:9.50px;color:#1a1a1a;transform:scaleX(0.904);">Toptan;Perakende;Dış ticaret;Stok v</div>
<div class="inp" style="left:852.3px;top:148.9px;width:153.2px;height:13.7px;border-color:#c9d6e8;"></div>
<div class="dd" style="left:996.4px;top:154.6px;"></div>
<div class="t" id="t87" style="left:855.1px;top:149.6px;font-size:9.50px;color:#1a1a1a;transform:scaleX(0.902);">Giriş;Depo Transfer</div>
<div class="inp" style="left:852.3px;top:169.5px;width:153.2px;height:13.7px;border-color:#c9d6e8;"></div>
<div class="dd" style="left:996.4px;top:175.2px;"></div>
<div class="t" id="t88" style="left:855.1px;top:170.2px;font-size:9.50px;color:#1a1a1a;transform:scaleX(0.895);">Normal;İade</div>
<div class="inp" style="left:852.3px;top:189.7px;width:153.2px;height:13.7px;border-color:#c9d6e8;"></div>
<div class="dd" style="left:996.4px;top:195.4px;"></div>
<div class="t" id="t89" style="left:855.1px;top:190.4px;font-size:9.50px;color:#1a1a1a;transform:scaleX(0.917);">Toptan yurtiçi ticaret;Perakende yur</div>
<div class="a" style="left:260px;top:211.5px;width:759.1px;height:276px;background:#e1ecfb;border:1px solid #a9c3e6;border-bottom:none;"></div>
<div class="a" style="left:260px;top:211.5px;width:759.1px;height:34.7px;background:linear-gradient(#eef4fd,#dbe8f9 45%,#c6d9f4);border:1px solid #9fbbe2;"></div>
<div class="a" style="left:278.2px;top:212.5px;width:1px;height:33px;background:#9fbbe2;"></div>
<div class="a" style="left:322.9px;top:212.5px;width:1px;height:33px;background:#9fbbe2;"></div>
<div class="a" style="left:442.1px;top:212.5px;width:1px;height:33px;background:#9fbbe2;"></div>
<div class="a" style="left:483.1px;top:212.5px;width:1px;height:33px;background:#9fbbe2;"></div>
<div class="a" style="left:520.5px;top:212.5px;width:1px;height:33px;background:#9fbbe2;"></div>
<div class="a" style="left:558.3px;top:212.5px;width:1px;height:33px;background:#9fbbe2;"></div>
<div class="a" style="left:616.5px;top:212.5px;width:1px;height:33px;background:#9fbbe2;"></div>
<div class="a" style="left:658.3px;top:212.5px;width:1px;height:33px;background:#9fbbe2;"></div>
<div class="a" style="left:700.9px;top:212.5px;width:1px;height:33px;background:#9fbbe2;"></div>
<div class="a" style="left:738.2px;top:212.5px;width:1px;height:33px;background:#9fbbe2;"></div>
<div class="a" style="left:821.9px;top:212.5px;width:1px;height:33px;background:#9fbbe2;"></div>
<div class="a" style="left:876.9px;top:212.5px;width:1px;height:33px;background:#9fbbe2;"></div>
<div class="a" style="left:914.2px;top:212.5px;width:1px;height:33px;background:#9fbbe2;"></div>
<div class="a" style="left:951.9px;top:212.5px;width:1px;height:33px;background:#9fbbe2;"></div>
<div class="a" style="left:990.0px;top:212.5px;width:1px;height:33px;background:#9fbbe2;"></div>
<div class="t" id="t90" style="left:265.2px;top:223.2px;font-size:7.50px;color:#86b2ee;">✦</div>
<div class="t" id="t91" style="left:291.6px;top:213.5px;font-size:8.50px;color:#241f3f;transform:scaleX(0.843);-webkit-text-stroke:.12px #241f3f;">STOK</div>
<div class="t" id="t92" style="left:290.0px;top:223.3px;font-size:8.50px;color:#241f3f;transform:scaleX(0.916);-webkit-text-stroke:.12px #241f3f;">KODU</div>
<div class="t" id="t93" style="left:364.5px;top:213.5px;font-size:8.50px;color:#241f3f;transform:scaleX(0.864);-webkit-text-stroke:.12px #241f3f;">STOK İSMİ</div>
<div class="t" id="t94" style="left:452.0px;top:213.5px;font-size:8.50px;color:#241f3f;transform:scaleX(0.884);-webkit-text-stroke:.12px #241f3f;">TARİH</div>
<div class="t" id="t95" style="left:494.0px;top:213.5px;font-size:8.50px;color:#241f3f;transform:scaleX(0.831);-webkit-text-stroke:.12px #241f3f;">SERİ</div>
<div class="t" id="t96" style="left:524.5px;top:213.5px;font-size:8.50px;color:#241f3f;transform:scaleX(0.913);-webkit-text-stroke:.12px #241f3f;">SIRA NO</div>
<div class="t" id="t97" style="left:568.0px;top:213.5px;font-size:8.50px;color:#241f3f;transform:scaleX(0.858);-webkit-text-stroke:.12px #241f3f;">EVRAK TİPİ</div>
<div class="t" id="t98" style="left:621.0px;top:213.5px;font-size:8.50px;color:#241f3f;transform:scaleX(0.847);-webkit-text-stroke:.12px #241f3f;">HAREKET</div>
<div class="t" id="t99" style="left:628.5px;top:223.3px;font-size:8.50px;color:#241f3f;transform:scaleX(0.860);-webkit-text-stroke:.12px #241f3f;">CİNSİ</div>
<div class="t" id="t100" style="left:663.5px;top:213.5px;font-size:8.50px;color:#241f3f;transform:scaleX(0.847);-webkit-text-stroke:.12px #241f3f;">HAREKET</div>
<div class="t" id="t101" style="left:673.0px;top:223.3px;font-size:8.50px;color:#241f3f;transform:scaleX(0.962);-webkit-text-stroke:.12px #241f3f;">TİPİ</div>
<div class="t" id="t102" style="left:712.5px;top:213.5px;font-size:8.50px;color:#241f3f;transform:scaleX(1.149);-webkit-text-stroke:.12px #241f3f;">N/İ</div>
<div class="t" id="t103" style="left:753.5px;top:213.5px;font-size:8.50px;color:#241f3f;transform:scaleX(0.871);-webkit-text-stroke:.12px #241f3f;">TİCARET TÜRÜ</div>
<div class="t" id="t104" style="left:838.5px;top:213.5px;font-size:8.50px;color:#241f3f;transform:scaleX(0.913);-webkit-text-stroke:.12px #241f3f;">DEPO</div>
<div class="t" id="t105" style="left:885.0px;top:213.5px;font-size:8.50px;color:#241f3f;transform:scaleX(0.882);-webkit-text-stroke:.12px #241f3f;">KARŞI</div>
<div class="t" id="t106" style="left:885.0px;top:223.3px;font-size:8.50px;color:#241f3f;transform:scaleX(0.913);-webkit-text-stroke:.12px #241f3f;">DEPO</div>
<div class="t" id="t107" style="left:923.5px;top:213.5px;font-size:8.50px;color:#241f3f;transform:scaleX(0.845);-webkit-text-stroke:.12px #241f3f;">PARTİ</div>
<div class="t" id="t108" style="left:964.5px;top:213.5px;font-size:8.50px;color:#241f3f;transform:scaleX(0.847);-webkit-text-stroke:.12px #241f3f;">LOT</div>
<div class="t" id="t109" style="left:999.5px;top:213.5px;font-size:8.50px;color:#241f3f;transform:scaleX(0.854);clip-path:inset(0 14.8% 0 0);-webkit-text-stroke:.12px #241f3f;">GİREN</div>
<div class="t" id="t110" style="left:997.5px;top:223.3px;font-size:8.50px;color:#241f3f;transform:scaleX(0.905);clip-path:inset(0 24.2% 0 0);-webkit-text-stroke:.12px #241f3f;">MİKTAR</div>
<div class="a" style="left:278.5px;top:246px;width:740.6px;height:14px;background:#fff;"></div>
<div class="a" style="left:261px;top:246px;width:17.5px;height:14px;background:linear-gradient(#f7fafe,#d4e3f6);border-bottom:1px solid #a9c3e6;"></div>
<div class="a" style="left:278.5px;top:259px;width:740.6px;height:1px;background:#e9eff6;"></div>
<div class="t" id="t111" style="left:280.6px;top:247.1px;font-size:9.50px;color:#231d52;transform:scaleX(0.845);">150.01.001</div>
<div class="t" id="t112" style="left:325.7px;top:247.1px;font-size:9.50px;color:#231d52;transform:scaleX(0.841);">BATARYA 3100mAH LİON</div>
<div class="t" id="t113" style="left:445.6px;top:247.1px;font-size:9.50px;color:#231d52;transform:scaleX(0.792);">1.1.2016</div>
<div class="t" id="t114" style="left:486.2px;top:247.1px;font-size:9.50px;color:#231d52;transform:scaleX(0.741);">A</div>
<div class="t" id="t115" style="right:467.1px;top:247.1px;font-size:9.50px;color:#231d52;transform-origin:100% 50%;transform:scaleX(0.880);">1</div>
<div class="t" id="t116" style="left:561.4px;top:247.1px;font-size:9.50px;color:#231d52;transform:scaleX(0.879);">Giriş irsaliyesi</div>
<div class="t" id="t117" style="left:618.6px;top:247.1px;font-size:9.50px;color:#231d52;transform:scaleX(0.901);">Toptan</div>
<div class="t" id="t118" style="left:661.3px;top:247.1px;font-size:9.50px;color:#231d52;transform:scaleX(0.845);">Giriş</div>
<div class="t" id="t119" style="left:703.5px;top:247.1px;font-size:9.50px;color:#231d52;transform:scaleX(0.891);">Normal</div>
<div class="t" id="t120" style="left:740.8px;top:247.1px;font-size:9.50px;color:#231d52;transform:scaleX(0.936);">Toptan yurtiçi ticaret</div>
<div class="t" id="t121" style="left:824.0px;top:247.1px;font-size:9.50px;color:#231d52;transform:scaleX(0.912);">Merkez depo</div>
<div class="t" id="t122" style="left:879.5px;top:247.1px;font-size:9.50px;color:#231d52;transform:scaleX(0.864);">Genel</div>
<div class="t" id="t123" style="right:35.6px;top:247.1px;font-size:9.50px;color:#231d52;transform-origin:100% 50%;transform:scaleX(0.880);">0</div>
<div class="t" id="t124" style="left:1006.2px;top:247.1px;font-size:9.50px;color:#231d52;transform:scaleX(0.889);clip-path:inset(0 8.5% 0 0);">500</div>
<div class="a" style="left:278.5px;top:260px;width:740.6px;height:13px;background:#3061c6;"></div>
<div class="a" style="left:261px;top:260px;width:17.5px;height:13px;background:linear-gradient(#f7fafe,#d4e3f6);border-bottom:1px solid #a9c3e6;"></div>
<svg style="left:267.5px;top:263.0px" width="5" height="7" viewBox="0 0 5 7"><path d="M.8 .6 L4 3.5 L.8 6.4" fill="none" stroke="#a9c3ea" stroke-width="1.1"/></svg>
<div class="a" style="left:278.5px;top:272px;width:740.6px;height:1px;background:#9db9ec;"></div>
<div class="t" id="t125" style="left:280.6px;top:260.6px;font-size:9.50px;color:#fff;transform:scaleX(0.845);">150.01.001</div>
<div class="t" id="t126" style="left:325.7px;top:260.6px;font-size:9.50px;color:#fff;transform:scaleX(0.841);">BATARYA 3100mAH LİON</div>
<div class="t" id="t127" style="left:445.6px;top:260.6px;font-size:9.50px;color:#fff;transform:scaleX(0.828);">15.1.2016</div>
<div class="t" id="t128" style="left:486.2px;top:260.6px;font-size:9.50px;color:#fff;transform:scaleX(0.741);">A</div>
<div class="t" id="t129" style="right:467.1px;top:260.6px;font-size:9.50px;color:#fff;transform-origin:100% 50%;transform:scaleX(0.880);">2</div>
<div class="t" id="t130" style="left:561.4px;top:260.6px;font-size:9.50px;color:#fff;transform:scaleX(0.879);">Giriş irsaliyesi</div>
<div class="t" id="t131" style="left:618.6px;top:260.6px;font-size:9.50px;color:#fff;transform:scaleX(0.901);">Toptan</div>
<div class="t" id="t132" style="left:661.3px;top:260.6px;font-size:9.50px;color:#fff;transform:scaleX(0.845);">Giriş</div>
<div class="t" id="t133" style="left:703.5px;top:260.6px;font-size:9.50px;color:#fff;transform:scaleX(0.891);">Normal</div>
<div class="t" id="t134" style="left:740.8px;top:260.6px;font-size:9.50px;color:#fff;transform:scaleX(0.936);">Toptan yurtiçi ticaret</div>
<div class="t" id="t135" style="left:824.0px;top:260.6px;font-size:9.50px;color:#fff;transform:scaleX(0.912);">Merkez depo</div>
<div class="t" id="t136" style="left:879.5px;top:260.6px;font-size:9.50px;color:#fff;transform:scaleX(0.864);">Genel</div>
<div class="t" id="t137" style="right:35.6px;top:260.6px;font-size:9.50px;color:#fff;transform-origin:100% 50%;transform:scaleX(0.880);">0</div>
<div class="t" id="t138" style="left:1006.2px;top:260.6px;font-size:9.50px;color:#fff;transform:scaleX(0.889);clip-path:inset(0 8.5% 0 0);">200</div>
<div class="a" style="left:278.5px;top:273px;width:740.6px;height:14px;background:#3061c6;"></div>
<div class="a" style="left:261px;top:273px;width:17.5px;height:14px;background:linear-gradient(#f7fafe,#d4e3f6);border-bottom:1px solid #a9c3e6;"></div>
<svg style="left:267.5px;top:276.5px" width="5" height="7" viewBox="0 0 5 7"><path d="M.8 .6 L4 3.5 L.8 6.4" fill="none" stroke="#3a6ed0" stroke-width="1.1"/></svg>
<div class="a" style="left:278.5px;top:286px;width:740.6px;height:1px;background:#9db9ec;"></div>
<div class="t" id="t139" style="left:280.6px;top:274.1px;font-size:9.50px;color:#fff;transform:scaleX(0.845);">150.01.002</div>
<div class="t" id="t140" style="left:325.7px;top:274.1px;font-size:9.50px;color:#fff;transform:scaleX(0.827);">BATARYA 5100mAH POLİMER</div>
<div class="t" id="t141" style="left:445.6px;top:274.1px;font-size:9.50px;color:#fff;transform:scaleX(0.828);">15.1.2016</div>
<div class="t" id="t142" style="left:486.2px;top:274.1px;font-size:9.50px;color:#fff;transform:scaleX(0.741);">A</div>
<div class="t" id="t143" style="right:467.1px;top:274.1px;font-size:9.50px;color:#fff;transform-origin:100% 50%;transform:scaleX(0.880);">2</div>
<div class="t" id="t144" style="left:561.4px;top:274.1px;font-size:9.50px;color:#fff;transform:scaleX(0.879);">Giriş irsaliyesi</div>
<div class="t" id="t145" style="left:618.6px;top:274.1px;font-size:9.50px;color:#fff;transform:scaleX(0.901);">Toptan</div>
<div class="t" id="t146" style="left:661.3px;top:274.1px;font-size:9.50px;color:#fff;transform:scaleX(0.845);">Giriş</div>
<div class="t" id="t147" style="left:703.5px;top:274.1px;font-size:9.50px;color:#fff;transform:scaleX(0.891);">Normal</div>
<div class="t" id="t148" style="left:740.8px;top:274.1px;font-size:9.50px;color:#fff;transform:scaleX(0.936);">Toptan yurtiçi ticaret</div>
<div class="t" id="t149" style="left:824.0px;top:274.1px;font-size:9.50px;color:#fff;transform:scaleX(0.912);">Merkez depo</div>
<div class="t" id="t150" style="left:879.5px;top:274.1px;font-size:9.50px;color:#fff;transform:scaleX(0.864);">Genel</div>
<div class="t" id="t151" style="right:35.6px;top:274.1px;font-size:9.50px;color:#fff;transform-origin:100% 50%;transform:scaleX(0.880);">0</div>
<div class="t" id="t152" style="left:1006.2px;top:274.1px;font-size:9.50px;color:#fff;transform:scaleX(0.889);clip-path:inset(0 8.5% 0 0);">120</div>
<div class="a" style="left:278.5px;top:287px;width:740.6px;height:13px;background:#3061c6;"></div>
<div class="a" style="left:261px;top:287px;width:17.5px;height:13px;background:linear-gradient(#f7fafe,#d4e3f6);border-bottom:1px solid #a9c3e6;"></div>
<svg style="left:267.5px;top:290.1px" width="5" height="7" viewBox="0 0 5 7"><path d="M.8 .6 L4 3.5 L.8 6.4" fill="none" stroke="#a9c3ea" stroke-width="1.1"/></svg>
<div class="a" style="left:278.5px;top:299px;width:740.6px;height:1px;background:#9db9ec;"></div>
<div class="t" id="t153" style="left:280.6px;top:287.7px;font-size:9.50px;color:#fff;transform:scaleX(0.845);">150.01.003</div>
<div class="t" id="t154" style="left:325.7px;top:287.7px;font-size:9.50px;color:#fff;transform:scaleX(0.809);">ASUS ZENFONE 2 ARKA KAPAK</div>
<div class="t" id="t155" style="left:445.6px;top:287.7px;font-size:9.50px;color:#fff;transform:scaleX(0.828);">15.1.2016</div>
<div class="t" id="t156" style="left:486.2px;top:287.7px;font-size:9.50px;color:#fff;transform:scaleX(0.741);">A</div>
<div class="t" id="t157" style="right:467.1px;top:287.7px;font-size:9.50px;color:#fff;transform-origin:100% 50%;transform:scaleX(0.880);">2</div>
<div class="t" id="t158" style="left:561.4px;top:287.7px;font-size:9.50px;color:#fff;transform:scaleX(0.879);">Giriş irsaliyesi</div>
<div class="t" id="t159" style="left:618.6px;top:287.7px;font-size:9.50px;color:#fff;transform:scaleX(0.901);">Toptan</div>
<div class="t" id="t160" style="left:661.3px;top:287.7px;font-size:9.50px;color:#fff;transform:scaleX(0.845);">Giriş</div>
<div class="t" id="t161" style="left:703.5px;top:287.7px;font-size:9.50px;color:#fff;transform:scaleX(0.891);">Normal</div>
<div class="t" id="t162" style="left:740.8px;top:287.7px;font-size:9.50px;color:#fff;transform:scaleX(0.936);">Toptan yurtiçi ticaret</div>
<div class="t" id="t163" style="left:824.0px;top:287.7px;font-size:9.50px;color:#fff;transform:scaleX(0.912);">Merkez depo</div>
<div class="t" id="t164" style="left:879.5px;top:287.7px;font-size:9.50px;color:#fff;transform:scaleX(0.864);">Genel</div>
<div class="t" id="t165" style="right:35.6px;top:287.7px;font-size:9.50px;color:#fff;transform-origin:100% 50%;transform:scaleX(0.880);">0</div>
<div class="t" id="t166" style="left:1006.2px;top:287.7px;font-size:9.50px;color:#fff;transform:scaleX(0.889);clip-path:inset(0 8.5% 0 0);">400</div>
<div class="a" style="left:278.5px;top:300px;width:740.6px;height:14px;background:#3061c6;"></div>
<div class="a" style="left:261px;top:300px;width:17.5px;height:14px;background:linear-gradient(#f7fafe,#d4e3f6);border-bottom:1px solid #a9c3e6;"></div>
<svg style="left:267.5px;top:303.6px" width="5" height="7" viewBox="0 0 5 7"><path d="M.8 .6 L4 3.5 L.8 6.4" fill="none" stroke="#a9c3ea" stroke-width="1.1"/></svg>
<div class="a" style="left:278.5px;top:313px;width:740.6px;height:1px;background:#9db9ec;"></div>
<div class="t" id="t167" style="left:280.6px;top:301.2px;font-size:9.50px;color:#fff;transform:scaleX(0.845);">150.01.004</div>
<div class="t" id="t168" style="left:325.7px;top:301.2px;font-size:9.50px;color:#fff;transform:scaleX(0.815);">ASUS ZENFONE 2 ÖN KAPAK</div>
<div class="t" id="t169" style="left:445.6px;top:301.2px;font-size:9.50px;color:#fff;transform:scaleX(0.828);">15.1.2016</div>
<div class="t" id="t170" style="left:486.2px;top:301.2px;font-size:9.50px;color:#fff;transform:scaleX(0.741);">A</div>
<div class="t" id="t171" style="right:467.1px;top:301.2px;font-size:9.50px;color:#fff;transform-origin:100% 50%;transform:scaleX(0.880);">2</div>
<div class="t" id="t172" style="left:561.4px;top:301.2px;font-size:9.50px;color:#fff;transform:scaleX(0.879);">Giriş irsaliyesi</div>
<div class="t" id="t173" style="left:618.6px;top:301.2px;font-size:9.50px;color:#fff;transform:scaleX(0.901);">Toptan</div>
<div class="t" id="t174" style="left:661.3px;top:301.2px;font-size:9.50px;color:#fff;transform:scaleX(0.845);">Giriş</div>
<div class="t" id="t175" style="left:703.5px;top:301.2px;font-size:9.50px;color:#fff;transform:scaleX(0.891);">Normal</div>
<div class="t" id="t176" style="left:740.8px;top:301.2px;font-size:9.50px;color:#fff;transform:scaleX(0.936);">Toptan yurtiçi ticaret</div>
<div class="t" id="t177" style="left:824.0px;top:301.2px;font-size:9.50px;color:#fff;transform:scaleX(0.912);">Merkez depo</div>
<div class="t" id="t178" style="left:879.5px;top:301.2px;font-size:9.50px;color:#fff;transform:scaleX(0.864);">Genel</div>
<div class="t" id="t179" style="right:35.6px;top:301.2px;font-size:9.50px;color:#fff;transform-origin:100% 50%;transform:scaleX(0.880);">0</div>
<div class="t" id="t180" style="left:1006.2px;top:301.2px;font-size:9.50px;color:#fff;transform:scaleX(0.889);clip-path:inset(0 8.5% 0 0);">400</div>
<div class="a" style="left:278.5px;top:314px;width:740.6px;height:13px;background:#3061c6;"></div>
<div class="a" style="left:261px;top:314px;width:17.5px;height:13px;background:linear-gradient(#f7fafe,#d4e3f6);border-bottom:1px solid #a9c3e6;"></div>
<svg style="left:267.5px;top:317.1px" width="5" height="7" viewBox="0 0 5 7"><path d="M.8 .6 L4 3.5 L.8 6.4" fill="none" stroke="#a9c3ea" stroke-width="1.1"/></svg>
<div class="a" style="left:278.5px;top:326px;width:740.6px;height:1px;background:#9db9ec;"></div>
<div class="t" id="t181" style="left:280.6px;top:314.7px;font-size:9.50px;color:#fff;transform:scaleX(0.845);">150.01.005</div>
<div class="t" id="t182" style="left:325.7px;top:314.7px;font-size:9.50px;color:#fff;transform:scaleX(0.818);">ASUS ZENFONE 2 LCD 5.5 INC</div>
<div class="t" id="t183" style="left:445.6px;top:314.7px;font-size:9.50px;color:#fff;transform:scaleX(0.828);">15.1.2016</div>
<div class="t" id="t184" style="left:486.2px;top:314.7px;font-size:9.50px;color:#fff;transform:scaleX(0.741);">A</div>
<div class="t" id="t185" style="right:467.1px;top:314.7px;font-size:9.50px;color:#fff;transform-origin:100% 50%;transform:scaleX(0.880);">2</div>
<div class="t" id="t186" style="left:561.4px;top:314.7px;font-size:9.50px;color:#fff;transform:scaleX(0.879);">Giriş irsaliyesi</div>
<div class="t" id="t187" style="left:618.6px;top:314.7px;font-size:9.50px;color:#fff;transform:scaleX(0.901);">Toptan</div>
<div class="t" id="t188" style="left:661.3px;top:314.7px;font-size:9.50px;color:#fff;transform:scaleX(0.845);">Giriş</div>
<div class="t" id="t189" style="left:703.5px;top:314.7px;font-size:9.50px;color:#fff;transform:scaleX(0.891);">Normal</div>
<div class="t" id="t190" style="left:740.8px;top:314.7px;font-size:9.50px;color:#fff;transform:scaleX(0.936);">Toptan yurtiçi ticaret</div>
<div class="t" id="t191" style="left:824.0px;top:314.7px;font-size:9.50px;color:#fff;transform:scaleX(0.912);">Merkez depo</div>
<div class="t" id="t192" style="left:879.5px;top:314.7px;font-size:9.50px;color:#fff;transform:scaleX(0.864);">Genel</div>
<div class="t" id="t193" style="right:35.6px;top:314.7px;font-size:9.50px;color:#fff;transform-origin:100% 50%;transform:scaleX(0.880);">0</div>
<div class="t" id="t194" style="left:1006.2px;top:314.7px;font-size:9.50px;color:#fff;transform:scaleX(0.889);clip-path:inset(0 8.5% 0 0);">300</div>
<div class="a" style="left:278.5px;top:327px;width:740.6px;height:14px;background:#3061c6;"></div>
<div class="a" style="left:261px;top:327px;width:17.5px;height:14px;background:linear-gradient(#f7fafe,#d4e3f6);border-bottom:1px solid #a9c3e6;"></div>
<svg style="left:267.5px;top:330.6px" width="5" height="7" viewBox="0 0 5 7"><path d="M.8 .6 L4 3.5 L.8 6.4" fill="none" stroke="#a9c3ea" stroke-width="1.1"/></svg>
<div class="a" style="left:278.5px;top:340px;width:740.6px;height:1px;background:#9db9ec;"></div>
<div class="t" id="t195" style="left:280.6px;top:328.2px;font-size:9.50px;color:#fff;transform:scaleX(0.845);">150.01.006</div>
<div class="t" id="t196" style="left:325.7px;top:328.2px;font-size:9.50px;color:#fff;transform:scaleX(0.793);">ASUS ZENFONE 2 KULAKLIK</div>
<div class="t" id="t197" style="left:445.6px;top:328.2px;font-size:9.50px;color:#fff;transform:scaleX(0.828);">15.1.2016</div>
<div class="t" id="t198" style="left:486.2px;top:328.2px;font-size:9.50px;color:#fff;transform:scaleX(0.741);">A</div>
<div class="t" id="t199" style="right:467.1px;top:328.2px;font-size:9.50px;color:#fff;transform-origin:100% 50%;transform:scaleX(0.880);">2</div>
<div class="t" id="t200" style="left:561.4px;top:328.2px;font-size:9.50px;color:#fff;transform:scaleX(0.879);">Giriş irsaliyesi</div>
<div class="t" id="t201" style="left:618.6px;top:328.2px;font-size:9.50px;color:#fff;transform:scaleX(0.901);">Toptan</div>
<div class="t" id="t202" style="left:661.3px;top:328.2px;font-size:9.50px;color:#fff;transform:scaleX(0.845);">Giriş</div>
<div class="t" id="t203" style="left:703.5px;top:328.2px;font-size:9.50px;color:#fff;transform:scaleX(0.891);">Normal</div>
<div class="t" id="t204" style="left:740.8px;top:328.2px;font-size:9.50px;color:#fff;transform:scaleX(0.936);">Toptan yurtiçi ticaret</div>
<div class="t" id="t205" style="left:824.0px;top:328.2px;font-size:9.50px;color:#fff;transform:scaleX(0.912);">Merkez depo</div>
<div class="t" id="t206" style="left:879.5px;top:328.2px;font-size:9.50px;color:#fff;transform:scaleX(0.864);">Genel</div>
<div class="t" id="t207" style="right:35.6px;top:328.2px;font-size:9.50px;color:#fff;transform-origin:100% 50%;transform:scaleX(0.880);">0</div>
<div class="t" id="t208" style="left:1006.2px;top:328.2px;font-size:9.50px;color:#fff;transform:scaleX(0.889);clip-path:inset(0 8.5% 0 0);">400</div>
<div class="a" style="left:278.5px;top:341px;width:740.6px;height:13px;background:#f6faf0;"></div>
<div class="a" style="left:261px;top:341px;width:17.5px;height:13px;background:linear-gradient(#f7fafe,#d4e3f6);border-bottom:1px solid #a9c3e6;"></div>
<div class="a" style="left:278.5px;top:353px;width:740.6px;height:1px;background:#e9eff6;"></div>
<div class="t" id="t209" style="left:280.6px;top:341.8px;font-size:9.50px;color:#231d52;transform:scaleX(0.845);">150.01.007</div>
<div class="t" id="t210" style="left:325.7px;top:341.8px;font-size:9.50px;color:#231d52;transform:scaleX(0.804);">ASUS ZENFONE 2 SARJ CİHAZI</div>
<div class="t" id="t211" style="left:445.6px;top:341.8px;font-size:9.50px;color:#231d52;transform:scaleX(0.828);">15.1.2016</div>
<div class="t" id="t212" style="left:486.2px;top:341.8px;font-size:9.50px;color:#231d52;transform:scaleX(0.741);">A</div>
<div class="t" id="t213" style="right:467.1px;top:341.8px;font-size:9.50px;color:#231d52;transform-origin:100% 50%;transform:scaleX(0.880);">2</div>
<div class="t" id="t214" style="left:561.4px;top:341.8px;font-size:9.50px;color:#231d52;transform:scaleX(0.879);">Giriş irsaliyesi</div>
<div class="t" id="t215" style="left:618.6px;top:341.8px;font-size:9.50px;color:#231d52;transform:scaleX(0.901);">Toptan</div>
<div class="t" id="t216" style="left:661.3px;top:341.8px;font-size:9.50px;color:#231d52;transform:scaleX(0.845);">Giriş</div>
<div class="t" id="t217" style="left:703.5px;top:341.8px;font-size:9.50px;color:#231d52;transform:scaleX(0.891);">Normal</div>
<div class="t" id="t218" style="left:740.8px;top:341.8px;font-size:9.50px;color:#231d52;transform:scaleX(0.936);">Toptan yurtiçi ticaret</div>
<div class="t" id="t219" style="left:824.0px;top:341.8px;font-size:9.50px;color:#231d52;transform:scaleX(0.912);">Merkez depo</div>
<div class="t" id="t220" style="left:879.5px;top:341.8px;font-size:9.50px;color:#231d52;transform:scaleX(0.864);">Genel</div>
<div class="t" id="t221" style="right:35.6px;top:341.8px;font-size:9.50px;color:#231d52;transform-origin:100% 50%;transform:scaleX(0.880);">0</div>
<div class="t" id="t222" style="left:1006.2px;top:341.8px;font-size:9.50px;color:#231d52;transform:scaleX(0.889);clip-path:inset(0 8.5% 0 0);">400</div>
<div class="a" style="left:278.5px;top:354px;width:740.6px;height:14px;background:#fff;"></div>
<div class="a" style="left:261px;top:354px;width:17.5px;height:14px;background:linear-gradient(#f7fafe,#d4e3f6);border-bottom:1px solid #a9c3e6;"></div>
<div class="a" style="left:278.5px;top:367px;width:740.6px;height:1px;background:#e9eff6;"></div>
<div class="t" id="t223" style="left:280.6px;top:355.3px;font-size:9.50px;color:#231d52;transform:scaleX(0.845);">153.01.002</div>
<div class="t" id="t224" style="left:325.7px;top:355.3px;font-size:9.50px;color:#231d52;transform:scaleX(0.800);">ASUS ZENFONE 2 SİLVER</div>
<div class="t" id="t225" style="left:445.6px;top:355.3px;font-size:9.50px;color:#231d52;transform:scaleX(0.828);">18.1.2016</div>
<div class="t" id="t226" style="left:486.2px;top:355.3px;font-size:9.50px;color:#231d52;transform:scaleX(0.741);">A</div>
<div class="t" id="t227" style="right:467.1px;top:355.3px;font-size:9.50px;color:#231d52;transform-origin:100% 50%;transform:scaleX(0.880);">3</div>
<div class="t" id="t228" style="left:561.4px;top:355.3px;font-size:9.50px;color:#231d52;transform:scaleX(0.879);">Giriş irsaliyesi</div>
<div class="t" id="t229" style="left:618.6px;top:355.3px;font-size:9.50px;color:#231d52;transform:scaleX(0.901);">Toptan</div>
<div class="t" id="t230" style="left:661.3px;top:355.3px;font-size:9.50px;color:#231d52;transform:scaleX(0.845);">Giriş</div>
<div class="t" id="t231" style="left:703.5px;top:355.3px;font-size:9.50px;color:#231d52;transform:scaleX(0.891);">Normal</div>
<div class="t" id="t232" style="left:740.8px;top:355.3px;font-size:9.50px;color:#231d52;transform:scaleX(0.936);">Toptan yurtiçi ticaret</div>
<div class="t" id="t233" style="left:824.0px;top:355.3px;font-size:9.50px;color:#231d52;transform:scaleX(0.912);">Merkez depo</div>
<div class="t" id="t234" style="left:879.5px;top:355.3px;font-size:9.50px;color:#231d52;transform:scaleX(0.864);">Genel</div>
<div class="t" id="t235" style="right:35.6px;top:355.3px;font-size:9.50px;color:#231d52;transform-origin:100% 50%;transform:scaleX(0.880);">0</div>
<div class="t" id="t236" style="left:1006.2px;top:355.3px;font-size:9.50px;color:#231d52;transform:scaleX(0.889);clip-path:inset(0 8.5% 0 0);">300</div>
<div class="a" style="left:278.5px;top:368px;width:740.6px;height:14px;background:#f6faf0;"></div>
<div class="a" style="left:261px;top:368px;width:17.5px;height:14px;background:linear-gradient(#f7fafe,#d4e3f6);border-bottom:1px solid #a9c3e6;"></div>
<div class="a" style="left:278.5px;top:381px;width:740.6px;height:1px;background:#e9eff6;"></div>
<div class="t" id="t237" style="left:280.6px;top:368.8px;font-size:9.50px;color:#231d52;transform:scaleX(0.775);">01</div>
<div class="t" id="t238" style="left:325.7px;top:368.8px;font-size:9.50px;color:#231d52;transform:scaleX(0.759);">ÇENE SUYU</div>
<div class="t" id="t239" style="left:445.6px;top:368.8px;font-size:9.50px;color:#231d52;transform:scaleX(0.828);">23.2.2016</div>
<div class="t" id="t240" style="right:467.1px;top:368.8px;font-size:9.50px;color:#231d52;transform-origin:100% 50%;transform:scaleX(0.880);">1</div>
<div class="t" id="t241" style="left:561.4px;top:368.8px;font-size:9.50px;color:#231d52;transform:scaleX(0.879);">Giriş irsaliyesi</div>
<div class="t" id="t242" style="left:618.6px;top:368.8px;font-size:9.50px;color:#231d52;transform:scaleX(0.901);">Toptan</div>
<div class="t" id="t243" style="left:661.3px;top:368.8px;font-size:9.50px;color:#231d52;transform:scaleX(0.845);">Giriş</div>
<div class="t" id="t244" style="left:703.5px;top:368.8px;font-size:9.50px;color:#231d52;transform:scaleX(0.891);">Normal</div>
<div class="t" id="t245" style="left:740.8px;top:368.8px;font-size:9.50px;color:#231d52;transform:scaleX(0.936);">Toptan yurtiçi ticaret</div>
<div class="t" id="t246" style="left:824.0px;top:368.8px;font-size:9.50px;color:#231d52;transform:scaleX(0.912);">Merkez depo</div>
<div class="t" id="t247" style="left:879.5px;top:368.8px;font-size:9.50px;color:#231d52;transform:scaleX(0.864);">Genel</div>
<div class="t" id="t248" style="right:35.6px;top:368.8px;font-size:9.50px;color:#231d52;transform-origin:100% 50%;transform:scaleX(0.880);">0</div>
<div class="t" id="t249" style="left:1006.2px;top:368.8px;font-size:9.50px;color:#231d52;transform:scaleX(0.889);clip-path:inset(0 8.5% 0 0);">100</div>
<div class="a" style="left:322.9px;top:246px;width:1px;height:136px;background:rgba(200,214,236,.6);"></div>
<div class="a" style="left:442.1px;top:246px;width:1px;height:136px;background:rgba(200,214,236,.6);"></div>
<div class="a" style="left:483.1px;top:246px;width:1px;height:136px;background:rgba(200,214,236,.6);"></div>
<div class="a" style="left:520.5px;top:246px;width:1px;height:136px;background:rgba(200,214,236,.6);"></div>
<div class="a" style="left:558.3px;top:246px;width:1px;height:136px;background:rgba(200,214,236,.6);"></div>
<div class="a" style="left:616.5px;top:246px;width:1px;height:136px;background:rgba(200,214,236,.6);"></div>
<div class="a" style="left:658.3px;top:246px;width:1px;height:136px;background:rgba(200,214,236,.6);"></div>
<div class="a" style="left:700.9px;top:246px;width:1px;height:136px;background:rgba(200,214,236,.6);"></div>
<div class="a" style="left:738.2px;top:246px;width:1px;height:136px;background:rgba(200,214,236,.6);"></div>
<div class="a" style="left:821.9px;top:246px;width:1px;height:136px;background:rgba(200,214,236,.6);"></div>
<div class="a" style="left:876.9px;top:246px;width:1px;height:136px;background:rgba(200,214,236,.6);"></div>
<div class="a" style="left:914.2px;top:246px;width:1px;height:136px;background:rgba(200,214,236,.6);"></div>
<div class="a" style="left:951.9px;top:246px;width:1px;height:136px;background:rgba(200,214,236,.6);"></div>
<div class="a" style="left:990.0px;top:246px;width:1px;height:136px;background:rgba(200,214,236,.6);"></div>
<div class="a" style="left:278px;top:246px;width:1px;height:136px;background:#a9c3e6;"></div>
<div class="a" style="left:278.5px;top:272px;width:740.6px;height:15px;border:1px dotted #d8c48e;"></div>
<div class="a" style="left:260px;top:487px;width:759.1px;height:21.6px;background:linear-gradient(#f6f9fe,#e6effb 45%,#d6e4f8);border:1px solid #a3bfe6;"></div>
<div class="a" style="left:280.2px;top:489.6px;width:42.2px;height:16.8px;background:#f0f5fd;border:1px solid #b4c9e8;"></div>
<div class="t" id="t250" style="left:284.3px;top:492.6px;font-size:9.50px;color:#2c4f8c;transform:scaleX(0.917);">Adet=10</div>
<div class="a" style="left:992.4px;top:489.8px;width:26.6px;height:16.6px;background:#edf3fc;border:1px solid #b4c9e8;border-right:none;"></div>
<div class="t" id="t251" style="left:996.2px;top:492.6px;font-size:9.50px;color:#2c4f8c;transform:scaleX(0.780);">3.120,</div>
<div class="a" style="left:258px;top:508.6px;width:761px;height:13.6px;background:#ededed;border-bottom:1px solid #c6d3e6;"></div>
<div class="a" style="left:273px;top:510.6px;width:263px;height:10px;background:linear-gradient(#f2f5fa,#c3cfe2 55%,#b7c5dc);border:1px solid #8f9fb8;border-radius:2px;"></div>
<div class="a" style="left:402.5px;top:513.5px;width:1px;height:4.5px;background:#44546e;"></div>
<div class="a" style="left:404.3px;top:513.5px;width:1px;height:4.5px;background:#44546e;"></div>
<div class="a" style="left:406.1px;top:513.5px;width:1px;height:4.5px;background:#44546e;"></div>
<div class="a" style="left:263.5px;top:512px;width:0;height:0;border-top:3.5px solid transparent;border-bottom:3.5px solid transparent;border-right:4px solid #3c4a66;"></div>
<div class="a" style="left:1010.5px;top:512px;width:0;height:0;border-top:3.5px solid transparent;border-bottom:3.5px solid transparent;border-left:4px solid #3c4a66;"></div>
<div class="a" style="left:258px;top:522.2px;width:761px;height:14.5px;background:#f0f0f0;"></div>
<div class="t" id="t252" style="left:260.6px;top:524.6px;font-size:9.50px;color:#1a1a1a;transform:scaleX(0.873);">Kayıt sayısı:</div>
<div class="t" id="t253" style="left:354.6px;top:524.6px;font-size:9.50px;color:#1a1a1a;transform:scaleX(0.785);">10</div>
<div class="t" id="t254" style="left:367.8px;top:524.6px;font-size:9.50px;color:#1a1a1a;transform:scaleX(0.858);">Süre:</div>
<div class="t" id="t255" style="left:432.8px;top:524.6px;font-size:9.50px;color:#1a1a1a;transform:scaleX(0.855);">0,2650 sn</div>
<div class="a" style="left:364.8px;top:524px;width:1px;height:12px;background:#d2d2d2;"></div>
<div class="a" style="left:470.0px;top:524px;width:1px;height:12px;background:#d2d2d2;"></div>
<div class="a" style="left:545.2px;top:524px;width:1px;height:12px;background:#d2d2d2;"></div>
<div class="a" style="left:1016.5px;top:534.4px;width:1.2px;height:1.2px;background:#b2b2b2;"></div><div class="a" style="left:1014.4px;top:534.4px;width:1.2px;height:1.2px;background:#b2b2b2;"></div><div class="a" style="left:1012.3px;top:534.4px;width:1.2px;height:1.2px;background:#b2b2b2;"></div><div class="a" style="left:1016.5px;top:532.3px;width:1.2px;height:1.2px;background:#b2b2b2;"></div><div class="a" style="left:1014.4px;top:532.3px;width:1.2px;height:1.2px;background:#b2b2b2;"></div><div class="a" style="left:1016.5px;top:530.2px;width:1.2px;height:1.2px;background:#b2b2b2;"></div>
<div class="red" style="left:260.3px;top:57.9px;width:287.2px;height:27.0px;"></div>
<div class="red" style="left:258.5px;top:93.0px;width:276.7px;height:103.3px;"></div>
<div class="red" style="left:528.1px;top:13.1px;width:78.6px;height:22.3px;"></div>
<div class="red" style="left:778.3px;top:74.7px;width:232.2px;height:135.1px;"></div>
<svg style="left:0;top:0" width="1024" height="547" viewBox="0 0 1024 547"><ellipse cx="344" cy="9.8" rx="98.5" ry="8.6" fill="none" stroke="#ed1c24" stroke-width="2.1" transform="rotate(-0.4 344 9.8)"/><ellipse cx="121.5" cy="358.1" rx="96.4" ry="14" fill="none" stroke="#ed1c24" stroke-width="2.1" transform="rotate(-0.6 121.5 358.1)"/></svg>
</body>
</html>
